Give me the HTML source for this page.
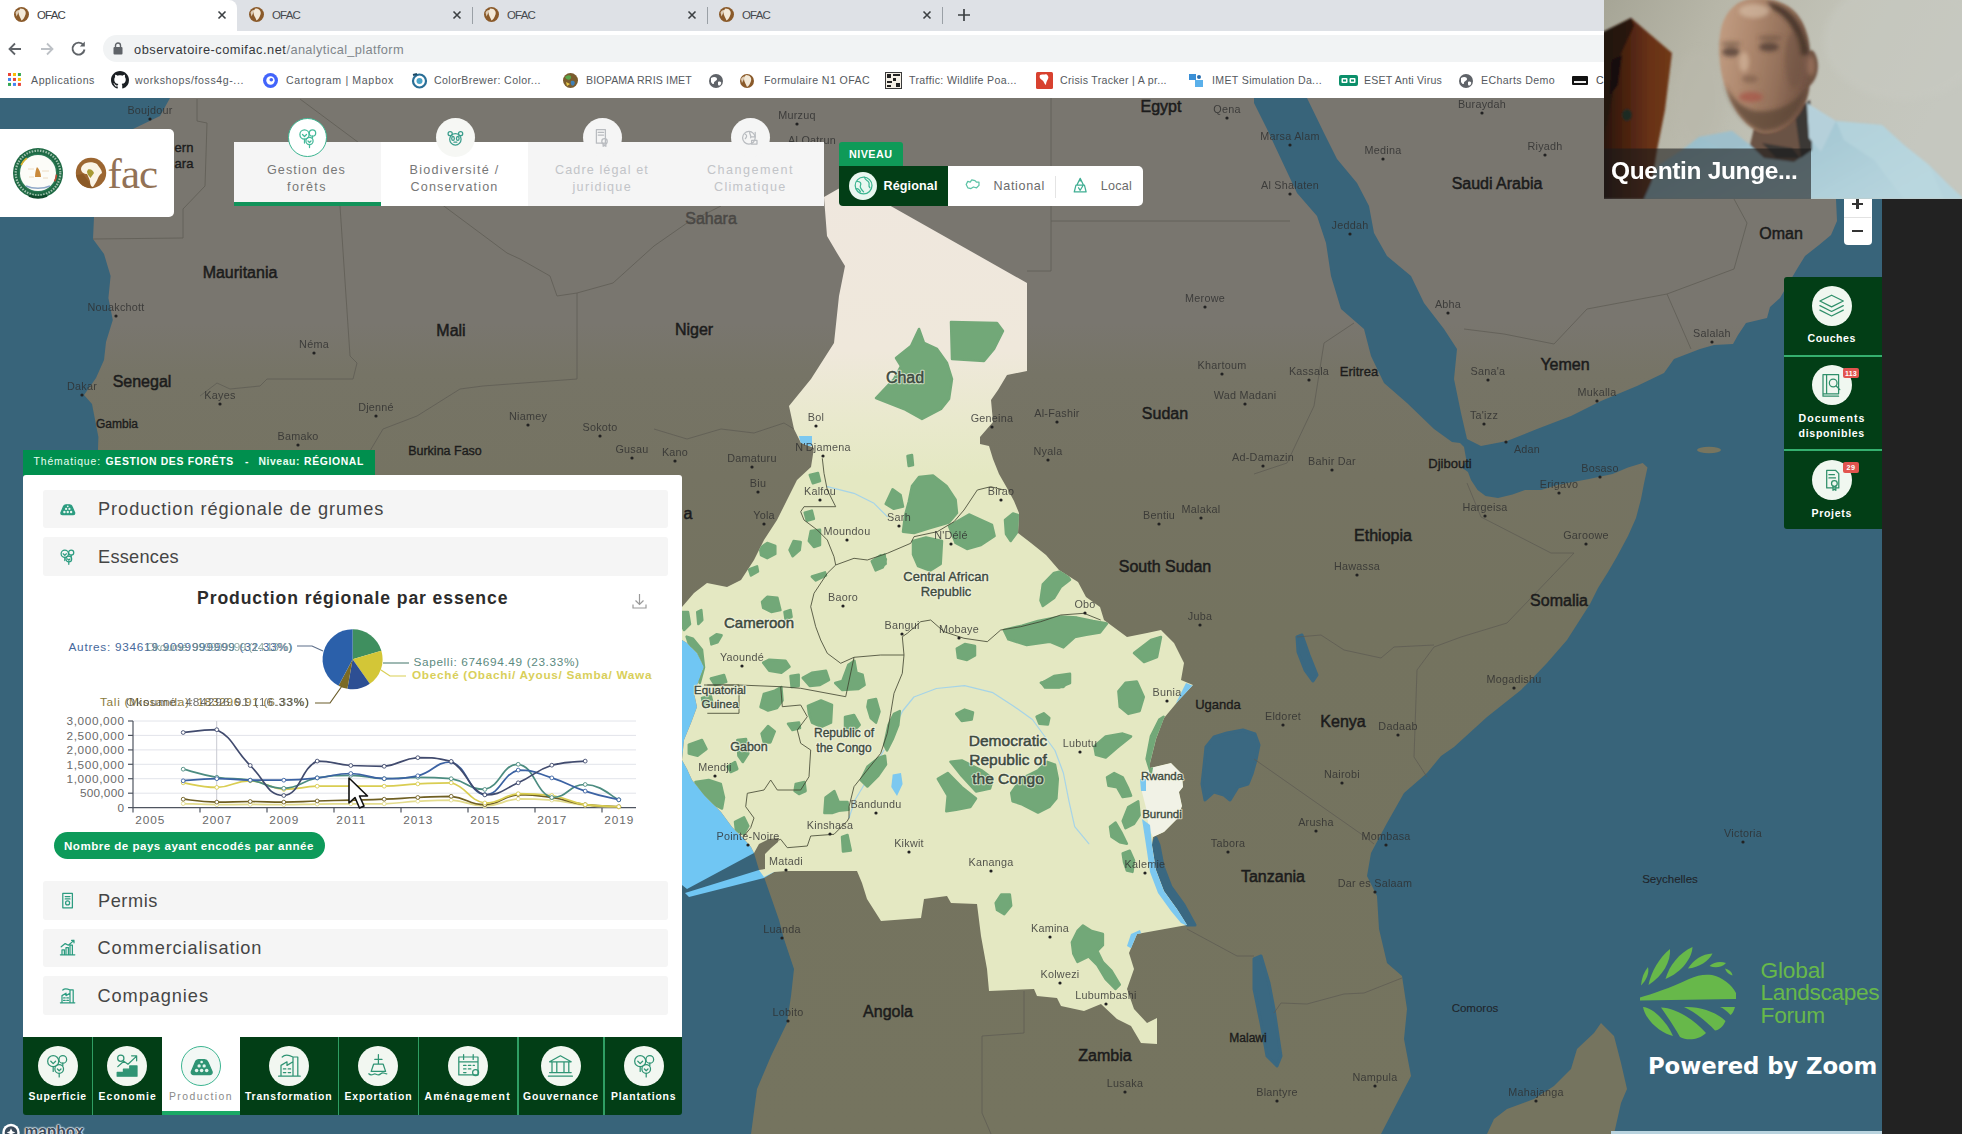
<!DOCTYPE html>
<html lang="fr"><head><meta charset="utf-8"><title>OFAC</title>
<style>
html,body{margin:0;padding:0;}
body{width:1962px;height:1134px;overflow:hidden;position:relative;background:#222;font-family:"Liberation Sans",sans-serif;}
.abs{position:absolute;}
.t{position:absolute;white-space:nowrap;}
#map{position:absolute;left:0;top:0;width:1962px;height:1134px;}
svg text{font-family:"Liberation Sans",sans-serif;}
</style></head><body>

<svg id="map" width="1962" height="1134" viewBox="0 0 1962 1134">
<defs>
<linearGradient id="land" x1="0" y1="0" x2="0" y2="1134" gradientUnits="userSpaceOnUse">
<stop offset="0" stop-color="#79766f"/><stop offset="0.285" stop-color="#79766f"/><stop offset="0.33" stop-color="#767466"/><stop offset="0.42" stop-color="#757362"/><stop offset="0.55" stop-color="#74735f"/><stop offset="1" stop-color="#75745f"/></linearGradient>
<linearGradient id="reg" x1="0" y1="0" x2="0" y2="1134" gradientUnits="userSpaceOnUse">
<stop offset="0.16" stop-color="#efe7de"/><stop offset="0.31" stop-color="#efe8db"/><stop offset="0.37" stop-color="#e9e9cd"/><stop offset="0.42" stop-color="#e4e8c2"/><stop offset="1" stop-color="#e4e8c2"/></linearGradient>
<clipPath id="mapclip"><rect x="0" y="98" width="1882" height="1036"/></clipPath>
<clipPath id="regclip"><polygon points="824,197 838,189 850,183 1027,283 1027,371 1007,375 998,390 991,400 993,422 980,437 980,444 989,446 993,459 999,474 1007,488 1014,501 1019,513 1018,533 1031,543 1046,555 1059,570 1078,582 1086,597 1100,607 1104,620 1127,637 1147,633 1161,630 1174,643 1184,663 1181,680 1193,685 1179,700 1164,718 1156,739 1150,763 1150,768 1171,763 1182,774 1183,787 1179,792 1182,806 1177,819 1164,832 1153,837 1152,845 1156,870 1164,891 1177,909 1187,925 1137,934 1129,953 1134,969 1127,989 1134,1009 1147,1023 1157,1018 1157,1044 1141,1043 1131,1026 1117,1019 1101,1004 1084,1011 1061,1006 1057,998 1037,996 1034,989 989,991 987,969 981,936 977,904 951,903 947,896 924,899 921,918 881,921 867,899 862,883 857,871 787,871 774,872 764,877 759,870 765,869 765,854 771,848 778,842 779,838 769,839 759,844 754,853 751,847 744,839 732,827 721,812 705,796 692,780 687,769 682,760 684,740 691,723 697,707 694,693 704,667 697,653 687,643 682,640 682,607 694,593 707,583 727,587 741,580 754,560 764,540 777,520 787,500 797,480 811,467 814,448 801,443 794,429 789,406 811,379 834,343 839,296 845,266 837,253 827,236"/></clipPath>
</defs>
<g clip-path="url(#mapclip)">
<rect x="0" y="98" width="1882" height="1036" fill="url(#land)"/>
<polygon points="0,98 170,98 160,116 133,129 118,165 100,200 94,217 93,239 104,254 110.6,276 108.4,298 112.8,320 106,342 104,360 96,378 84,395 92,404 95,419.5 98.4,437 98,449 100,480 100,640 0,640" fill="#38647a"/>
<polygon points="0,1134 0,640 682,640 687,643 697,653 704,667 694,693 697,707 691,723 684,740 682,760 687,769 692,780 705,796 721,812 732,827 744,839 751,847 754,853 759,870 764,877 771,897 779,920 784,939 794,969 791,996 787,1023 771,1056 757,1089 751,1134" fill="#38647a"/>
<polygon points="1254,98 1254,103 1267,129 1281,159 1297,193 1317,216 1326,243 1331,276 1341,309 1364,329 1371,356 1384,383 1407,403 1434,429 1452,442 1460,443 1464,447 1466.5,461 1461.7,467.6 1468,472 1471,480 1477.6,490 1485.6,496 1498,498 1512.5,494.6 1525,490 1541,490 1557,485 1573,482 1589,479 1612.5,474 1628,467.6 1642.7,463 1647.5,467.6 1644,483.5 1641,499 1636,518 1628,536 1617,556.5 1608,572 1598,588 1590,604 1567,640 1547,663 1521,690 1487,717 1454,747 1441,756 1427,773 1404,793 1387,823 1371,853 1367,876 1377,896 1379,929 1387,963 1402,976 1407,1009 1404,1039 1411,1076 1397,1103 1381,1134 1882,1134 1882,199 1836,199 1837,221 1831,235 1819,245 1805,256 1797,269 1780,298 1770,307 1767,318 1746,323 1738,335 1733,344 1714,345 1700,349 1674,359 1664,373 1637,386 1601,401 1571,416 1537,429 1507,441 1481,446 1467,439 1461,413 1454,379 1457,349 1444,329 1424,303 1411,276 1387,256 1374,233 1369,206 1357,183 1337,159 1324,133 1307,98" fill="#38647a"/>
<polygon points="1601,1023 1614,1036 1621,1063 1627,1089 1621,1103 1614,1134 1487,1134 1494,1119 1507,1109 1534,1099 1554,1086 1571,1069 1577,1049 1594,1033" fill="#75745f"/>
<ellipse cx="1709" cy="450" rx="12" ry="3.2" fill="#77755f"/>
<polygon points="1206,747 1214,737 1227,733 1243,730 1255,734 1259,745 1256,760 1252,774 1248,784 1238,787 1230,800 1224,795 1214,792 1205,800 1202,784 1204,766" fill="#3a6881" stroke="#3a6881" stroke-linejoin="round" stroke-width="3"/>
<polygon points="1152,845 1156,870 1164,891 1177,909 1187,925 1195,925 1184,905 1171,887 1163,866 1159,845 1156,838" fill="#3a6881" stroke="#3a6881" stroke-linejoin="round" stroke-width="3"/>
<polygon points="1297,637 1302,635 1309,655 1317,675 1313,681 1305,670 1298,652" fill="#3a6881" stroke="#3a6881" stroke-linejoin="round" stroke-width="3"/>
<polygon points="1254,959 1261,956 1269,983 1274,1009 1281,1056 1277,1066 1267,1056 1261,1023 1254,989" fill="#3a6881" stroke="#3a6881" stroke-linejoin="round" stroke-width="3"/>
<polygon points="682,640 687,643 697,653 704,667 694,693 697,707 691,723 684,740 682,760 687,769 692,780 705,796 721,812 732,827 744,839 751,847 754,853 687,889 682,885" fill="#70c6f3"/>
<polygon points="759,870 774,872 764,878 689,897 685,893" fill="#70c6f3"/>
<g fill="none" stroke="#5c5a52" stroke-width="0.9" stroke-linejoin="round" opacity="0.8">
<polyline points="93,239 183,238 183,209 205,186 207,123 197,121 197,99"/>
<polyline points="340,206 350,356 357,363 353,379 267,379 260,386 230,389 217,383 200,396"/>
<polyline points="300,99 507,253 520,259 550,276 557,296 577,293"/>
<polyline points="577,293 613,283 654,246 687,223 721,206"/>
<polyline points="577,293 577,379 483,386 460,389 417,416 383,429 367,456"/>
<polyline points="654,429 687,439 721,429 754,433 784,423 794,429"/>
<polyline points="1051,98 1051,271"/>
<polyline points="1027,271 1051,271"/>
<polyline points="1051,221 1290,221"/>
<polyline points="1467,483 1481,517 1551,553 1574,553 1507,623 1461,637 1434,647 1417,670 1414,757 1427,777"/>
<polyline points="1297,637 1321,635 1344,650 1381,658 1394,647 1434,645"/>
<polyline points="1254,759 1364,836 1374,844"/>
<polyline points="1464,329 1504,334 1554,344 1587,309 1667,294 1691,349"/>
<polyline points="1667,294 1734,269 1747,223 1734,199"/>
<polyline points="982,1036 982,1113 991,1134"/>
<polyline points="1024,991 1024,1033 982,1036"/>
<polyline points="1187,929 1237,956 1254,956"/>
<polyline points="1402,978 1364,993 1344,994 1307,1004 1281,1003 1274,1013"/>
<polyline points="1354,323 1324,343 1314,406 1287,463 1254,474"/>
</g>
<polygon points="824,197 838,189 850,183 1027,283 1027,371 1007,375 998,390 991,400 993,422 980,437 980,444 989,446 993,459 999,474 1007,488 1014,501 1019,513 1018,533 1031,543 1046,555 1059,570 1078,582 1086,597 1100,607 1104,620 1127,637 1147,633 1161,630 1174,643 1184,663 1181,680 1193,685 1179,700 1164,718 1156,739 1150,763 1150,768 1171,763 1182,774 1183,787 1179,792 1182,806 1177,819 1164,832 1153,837 1152,845 1156,870 1164,891 1177,909 1187,925 1137,934 1129,953 1134,969 1127,989 1134,1009 1147,1023 1157,1018 1157,1044 1141,1043 1131,1026 1117,1019 1101,1004 1084,1011 1061,1006 1057,998 1037,996 1034,989 989,991 987,969 981,936 977,904 951,903 947,896 924,899 921,918 881,921 867,899 862,883 857,871 787,871 774,872 764,877 759,870 765,869 765,854 771,848 778,842 779,838 769,839 759,844 754,853 751,847 744,839 732,827 721,812 705,796 692,780 687,769 682,760 684,740 691,723 697,707 694,693 704,667 697,653 687,643 682,640 682,607 694,593 707,583 727,587 741,580 754,560 764,540 777,520 787,500 797,480 811,467 814,448 801,443 794,429 789,406 811,379 834,343 839,296 845,266 837,253 827,236" fill="url(#reg)"/>
<g clip-path="url(#regclip)">
<polygon points="1150,768 1171,763 1182,774 1183,787 1179,792 1182,806 1177,819 1164,832 1153,837 1149,829 1146,808 1142,792 1142,776" fill="#f1f2e6"/>
<polygon points="1142,819 1146,845 1150,872 1158,893 1171,911 1181,923 1190,927 1177,909 1164,891 1156,870 1152,845 1150,825" fill="#7cc8f0"/>
<polygon points="1186,683 1194,686 1182,700 1176,703" fill="#7cc8f0"/>
<polygon points="1140,779 1146,779 1146,791 1141,791" fill="#7cc8f0"/>
<polygon points="799,436 812,436 812,446 801,446" fill="#7cc8f0"/>
<polygon points="892.7,774.5 901,773 902.6,784 897,796 891.3,787" fill="#7cc8f0"/>
<polygon points="1127,946 1131,934 1140,930 1142,936 1134,950" fill="#7cc8f0"/>
<g fill="none" stroke="#9bd0ee" stroke-width="1.2" opacity="0.85" stroke-linecap="round" stroke-linejoin="round">
<polyline points="888,745 893,730 902.6,711 913.9,697 936.4,688.5 964.6,685.6 992.9,692.7 1012.6,705.4 1032.4,719.5 1055,750.5 1063.4,773 1069,801.3 1074.7,826.7 1088.8,843.7"/>
<polyline points="827.3,486.7 854,493.3 874,503.3 887.3,516.7"/>
<polyline points="849,818 855,800 870,775 884,750"/>
</g>
<g fill="#72a878" stroke="#72a878" stroke-width="2.5" stroke-linejoin="round">
<polygon points="919,329 924,343 937,349 947,363 952,379 949,399 941,409 922,419 904,409 876,398 894,379 901,366 896,358 911,346"/>
<polygon points="951,322 997,323 1003,331 994,349 984,361 952,359"/>
<polygon points="912,486 919,477 933,475.5 946.5,486 955.6,499.6 957,513 949,522.5 930,528 914,533 903,531.7 905,515.6 908.7,502"/>
<polygon points="949,526 969,514.5 981,520 992,525 994.6,536 981,545 967,549 955.6,543"/>
<polygon points="913,541 926,537.4 942,541 940.7,564 930,570.7 918,566 913,554.6"/>
<polygon points="885.7,504 892.6,489.3 900.6,495 903,506.5 893.8,508.8"/>
<polygon points="907.5,456 912,455 913,465 908.7,466"/>
<polygon points="1005,520 1013,513.4 1019.8,515.6 1017.5,531.7 1010.7,541 1006,534"/>
<polygon points="1042.8,584.4 1054,573 1063.4,570.7 1070,579.8 1061,586.7 1054,598 1042.8,606 1040.5,600.5"/>
<polygon points="1003.8,630 1022,625.7 1038,621 1061,616.5 1077,617.6 1093,621 1107,623.4 1100,632.6 1086.3,634.8 1074.8,637 1063.4,647.4 1049.6,641.7 1026.7,645 1008.4,639.4"/>
<polygon points="956.8,648.6 964.8,644 975,646 975,655.5 967,660 958,657.8"/>
<polygon points="1041.6,683 1054,676 1070,673.8 1070,683 1058.8,687.6 1045,687.6"/>
<polygon points="880,557 884.6,554.6 885.7,563.8 880,568"/>
<polygon points="1134,653 1151,640 1161,637 1157,657 1144,662"/>
<polygon points="1040.8,682.8 1052,680 1069,680 1063.4,687 1046.5,687"/>
<polygon points="1118.4,691.3 1125.5,682.8 1136.8,681.4 1143.8,697 1139.6,711 1128.3,713.9 1119.8,706.8"/>
<polygon points="956.2,713.9 964.6,709.6 973,712.4 971.7,719.5 961.8,720.9"/>
<polygon points="1036.6,716.7 1043.7,713.3 1049.3,718 1047.9,724.6 1039.4,723.7"/>
<polygon points="1094.4,746.3 1105.7,736.4 1122.7,733.6 1131.1,736.4 1117,747.7 1105.7,757.6 1095.9,754.8"/>
<polygon points="1146.6,759 1150.9,736.4 1159.3,719.5 1163.6,716.7 1159.3,736.4 1153.7,756.2 1150.9,773"/>
<polygon points="950.5,761.8 961.8,760.4 981.6,770.3 992.9,778.8 990,788.6 976,791.5 961.8,776"/>
<polygon points="937.8,778.8 947.7,773 961.8,787.2 976,798.5 970.3,807 956.2,809.8 946.3,811.2 947.7,795.7"/>
<polygon points="1011.2,792.9 1021,778.8 1038,770.3 1046.5,761.8 1055,764.7 1057.8,778.8 1056.4,798.5 1049.3,807 1038,812.6 1021,804 1012.6,801.3"/>
<polygon points="1107,777.3 1114.2,773 1122.7,777.3 1128.3,788.6 1131.1,795.7 1122.7,797 1117,787.2 1108.5,785.8"/>
<polygon points="1122.7,821 1128.3,807 1138.2,801.3 1139.6,815.4 1134,823.9 1125.5,828.2"/>
<polygon points="1110,826.7 1115.6,822.5 1121.3,832.4 1126.9,843.7 1119.8,842.3 1111.4,836.6"/>
<polygon points="1122.7,853.5 1129.7,850.7 1134,860.6 1132.5,871.9 1126.9,870.5 1124,862"/>
<polygon points="995.7,902.9 1001.3,894.4 1009.8,894.4 1011.2,905.7 1004.2,914.2 997,910"/>
<polygon points="1071.9,942.4 1077.5,931 1083,925.5 1091.6,931 1102.9,934 1102.9,945.2 1097.3,950.9 1102.9,962.2 1111.4,970.6 1119.8,984.7 1115.6,989 1105.7,979 1097.3,965 1088.8,956.5 1077.5,962 1073.3,953.7"/>
<polygon points="884.2,744.9 888.5,725 894,713.9 899.8,711 898.3,725 892.7,739.3 887,750.5"/>
<polygon points="763.2,662.7 769.3,659.7 785.5,660.7 789.5,666.8 781.4,672.8 769.3,670.8"/>
<polygon points="790.5,675.9 798.7,674.8 798.7,686 791.6,687"/>
<polygon points="802.7,677.9 811.8,672.8 826,670.8 829,679.9 820,685 809.8,686"/>
<polygon points="835.2,683 842.3,681 848.4,664.7 854.4,660.7 856.5,672.8 862.6,674.8 864.6,685 858.5,689 842.3,690"/>
<polygon points="760.5,707 763.8,694 774.8,690.6 781.4,687 782.5,700.5 777,708 768,710.5"/>
<polygon points="807.9,706 821,700.5 832,705 831,722.6 821,727 812,722.6 809,713.8"/>
<polygon points="868.5,700.5 876,699 879.5,711.6 876,722.6 870.7,718 867.4,707"/>
<polygon points="845,717 854,715 859.7,724.8 854,731 845,729"/>
<polygon points="860.8,780 867.4,766.7 878.4,757.9 885,755.7 886,764.5 878.4,775.5 867.4,786.5"/>
<polygon points="761.6,733.6 768,726 774.8,731.4 770.4,742.4 763.8,742.4"/>
<polygon points="737.3,740 746,739 748.3,753.5 742.8,762 738.4,755.7"/>
<polygon points="688.8,744.6 702,740 706.5,749 697.6,755.7 688.8,753.5"/>
<polygon points="695.4,782 708.7,780 720.8,784 724,797.5 722,808.6 713,804 702,793"/>
<polygon points="727.4,766.7 735,762 737.3,769 730.7,772"/>
<polygon points="735,821.8 744,817.4 748.3,826 744,834 736,830.6"/>
<polygon points="795.7,784 804.5,782 805.6,791 799,794 794.6,791"/>
<polygon points="825.5,797.5 834.3,791 838.7,802 847.5,802 848.6,809.7 838.7,810.8 832,813 824.4,813"/>
<polygon points="842,837 847.5,835 850.8,850.5 843,851.6"/>
<polygon points="788,723.7 799,722.6 800,728 792.4,730"/>
<polygon points="702,698 710.8,696 713,705 704,707"/>
<polygon points="710.8,678.5 724,675 726.3,681.8 715,685"/>
<polygon points="686.6,636.6 693,638.8 702,649.8 704,667.5 699.8,683 695.4,674 693,656.5"/>
<polygon points="809.8,475 818,473 820,481 812.9,483.2"/>
<polygon points="804.7,512.6 811.8,510.6 813.9,518.7 806.8,520.7"/>
<polygon points="808.8,541 810.8,530.9 820,529.8 820,545 813.9,547"/>
<polygon points="789.5,550 793.6,541 800.7,542 799.7,550 792.6,556.2"/>
<polygon points="760,548 767.2,543 775.3,546 775.3,554 767.2,558.2 761,555.2"/>
<polygon points="749,569.4 757,566.3 758,571.4 751,575.5"/>
<polygon points="811.8,576.5 825,572.4 826,575.5 815.9,580.5"/>
<polygon points="871.7,561.3 880.8,555.2 885.9,559.2 882.8,567.4 875.7,570.4"/>
<polygon points="762,601.8 767.2,596.8 777.4,597.8 780.4,610 771.3,612 763.2,608"/>
<polygon points="784.5,612 790.5,610 791.6,617 785.5,619"/>
<polygon points="682,612 688,612 690,624 684,630 682,626"/>
<polygon points="697.2,612 701.3,610 702.3,620 698.3,624"/>
<polygon points="710.4,638.4 716.5,634.3 721.6,635.3 717.5,642.4 711.4,644.4"/>
</g>
<g fill="none" stroke="#3f4330" stroke-width="0.9" stroke-linejoin="round" opacity="0.9">
<polyline points="822.3,458.3 824,473.3 827.3,490 835.7,506.7 804,506.7 800.7,511.7 804,520 817.3,530 827.3,540 834,556.7 835.7,565 827.3,573.3 814,593.3 810.7,606.7 815.7,626.7 820.7,640 827.3,653.3 840.7,663.3 854,657.3 880.7,655 904,655 902.3,636.7"/>
<polyline points="835.7,565 854,558.3 867.3,560 887.3,553.3 910.7,543.3 914,536.7 937.3,531.7 954,521.7 964,510 977.3,490 990.7,486.7 1004,490"/>
<polyline points="902.3,636.7 907.3,633.3 920.7,621.7 930.7,620 944,631.7 964,638.3 987.3,641.7 1000.7,630 1020.7,626.7 1040.7,621.7 1060.7,615 1084,613.3 1100.7,620"/>
<polyline points="904,655 902.3,673.3 894,693.3 890.7,713.3 887.3,733.3 880.7,753.3 867.3,770 854,786.7 849,806.7 849,818"/>
<polyline points="849,818 847.3,821 834,834.3 810.7,836 807.3,846 787.3,847.7 780.7,839.3 760.7,846"/>
<polyline points="704,685 739,685 780.7,686.7 800.7,688.3 845.7,696.7 854,657.3"/>
<polyline points="707.3,685 739,685 739,713.3 707.3,713.3"/>
<polyline points="780.7,686.7 782.3,706.7 800.7,705 807.3,716.7 797.3,730 800.7,743.3 810.7,750 809,776.7 800.7,790 777.3,790 770.7,780 764,790 747.3,793.3 745.7,806.7 754,818"/>
<polyline points="754,818 750.7,827.7 744,836"/>
</g>
</g>
<g text-anchor="middle">
<circle cx="150" cy="119" r="1.6" fill="#222"/>
<text x="150" y="113.5" font-size="10.8" letter-spacing="0.25" fill="#2e2e2e" opacity="0.8">Boujdour</text>
<circle cx="116" cy="316" r="1.6" fill="#222"/>
<text x="116" y="310.5" font-size="10.8" letter-spacing="0.25" fill="#2e2e2e" opacity="0.8">Nouakchott</text>
<circle cx="314" cy="353" r="1.6" fill="#222"/>
<text x="314" y="347.5" font-size="10.8" letter-spacing="0.25" fill="#2e2e2e" opacity="0.8">Néma</text>
<circle cx="82" cy="395" r="1.6" fill="#222"/>
<text x="82" y="389.5" font-size="10.8" letter-spacing="0.25" fill="#2e2e2e" opacity="0.8">Dakar</text>
<circle cx="220" cy="404" r="1.6" fill="#222"/>
<text x="220" y="398.5" font-size="10.8" letter-spacing="0.25" fill="#2e2e2e" opacity="0.8">Kayes</text>
<circle cx="376" cy="416" r="1.6" fill="#222"/>
<text x="376" y="410.5" font-size="10.8" letter-spacing="0.25" fill="#2e2e2e" opacity="0.8">Djenné</text>
<circle cx="298" cy="445" r="1.6" fill="#222"/>
<text x="298" y="439.5" font-size="10.8" letter-spacing="0.25" fill="#2e2e2e" opacity="0.8">Bamako</text>
<circle cx="528" cy="425" r="1.6" fill="#222"/>
<text x="528" y="419.5" font-size="10.8" letter-spacing="0.25" fill="#2e2e2e" opacity="0.8">Niamey</text>
<circle cx="600" cy="436" r="1.6" fill="#222"/>
<text x="600" y="430.5" font-size="10.8" letter-spacing="0.25" fill="#2e2e2e" opacity="0.8">Sokoto</text>
<circle cx="632" cy="458" r="1.6" fill="#222"/>
<text x="632" y="452.5" font-size="10.8" letter-spacing="0.25" fill="#2e2e2e" opacity="0.8">Gusau</text>
<circle cx="675" cy="461" r="1.6" fill="#222"/>
<text x="675" y="455.5" font-size="10.8" letter-spacing="0.25" fill="#2e2e2e" opacity="0.8">Kano</text>
<circle cx="797" cy="124" r="1.6" fill="#222"/>
<text x="797" y="118.5" font-size="10.8" letter-spacing="0.25" fill="#2e2e2e" opacity="0.8">Murzuq</text>
<circle cx="812" cy="149" r="1.6" fill="#222"/>
<text x="812" y="143.5" font-size="10.8" letter-spacing="0.25" fill="#2e2e2e" opacity="0.8">Al Qatrun</text>
<circle cx="1227" cy="118" r="1.6" fill="#222"/>
<text x="1227" y="112.5" font-size="10.8" letter-spacing="0.25" fill="#2e2e2e" opacity="0.8">Qena</text>
<circle cx="1290" cy="145" r="1.6" fill="#222"/>
<text x="1290" y="139.5" font-size="10.8" letter-spacing="0.25" fill="#2e2e2e" opacity="0.8">Marsa Alam</text>
<circle cx="1290" cy="194" r="1.6" fill="#222"/>
<text x="1290" y="188.5" font-size="10.8" letter-spacing="0.25" fill="#2e2e2e" opacity="0.8">Al Shalaten</text>
<circle cx="1383" cy="159" r="1.6" fill="#222"/>
<text x="1383" y="153.5" font-size="10.8" letter-spacing="0.25" fill="#2e2e2e" opacity="0.8">Medina</text>
<circle cx="1482" cy="113" r="1.6" fill="#222"/>
<text x="1482" y="107.5" font-size="10.8" letter-spacing="0.25" fill="#2e2e2e" opacity="0.8">Buraydah</text>
<circle cx="1545" cy="155" r="1.6" fill="#222"/>
<text x="1545" y="149.5" font-size="10.8" letter-spacing="0.25" fill="#2e2e2e" opacity="0.8">Riyadh</text>
<circle cx="1350" cy="234" r="1.6" fill="#222"/>
<text x="1350" y="228.5" font-size="10.8" letter-spacing="0.25" fill="#2e2e2e" opacity="0.8">Jeddah</text>
<circle cx="1448" cy="313" r="1.6" fill="#222"/>
<text x="1448" y="307.5" font-size="10.8" letter-spacing="0.25" fill="#2e2e2e" opacity="0.8">Abha</text>
<circle cx="1488" cy="380" r="1.6" fill="#222"/>
<text x="1488" y="374.5" font-size="10.8" letter-spacing="0.25" fill="#2e2e2e" opacity="0.8">Sana'a</text>
<circle cx="1484" cy="424" r="1.6" fill="#222"/>
<text x="1484" y="418.5" font-size="10.8" letter-spacing="0.25" fill="#2e2e2e" opacity="0.8">Ta'izz</text>
<circle cx="1597" cy="401" r="1.6" fill="#222"/>
<text x="1597" y="395.5" font-size="10.8" letter-spacing="0.25" fill="#2e2e2e" opacity="0.8">Mukalla</text>
<circle cx="1712" cy="342" r="1.6" fill="#222"/>
<text x="1712" y="336.5" font-size="10.8" letter-spacing="0.25" fill="#2e2e2e" opacity="0.8">Salalah</text>
<circle cx="1506" cy="442" r="1.6" fill="#222"/>
<text x="1527" y="452.5" font-size="10.8" letter-spacing="0.25" fill="#2e2e2e" opacity="0.8">Adan</text>
<circle cx="1205" cy="307" r="1.6" fill="#222"/>
<text x="1205" y="301.5" font-size="10.8" letter-spacing="0.25" fill="#2e2e2e" opacity="0.8">Merowe</text>
<circle cx="1222" cy="374" r="1.6" fill="#222"/>
<text x="1222" y="368.5" font-size="10.8" letter-spacing="0.25" fill="#2e2e2e" opacity="0.8">Khartoum</text>
<circle cx="1309" cy="380" r="1.6" fill="#222"/>
<text x="1309" y="374.5" font-size="10.8" letter-spacing="0.25" fill="#2e2e2e" opacity="0.8">Kassala</text>
<circle cx="1245" cy="404" r="1.6" fill="#222"/>
<text x="1245" y="398.5" font-size="10.8" letter-spacing="0.25" fill="#2e2e2e" opacity="0.8">Wad Madani</text>
<circle cx="1057" cy="422" r="1.6" fill="#222"/>
<text x="1057" y="416.5" font-size="10.8" letter-spacing="0.25" fill="#2e2e2e" opacity="0.8">Al-Fashir</text>
<circle cx="992" cy="427" r="1.6" fill="#222"/>
<text x="992" y="421.5" font-size="10.8" letter-spacing="0.25" fill="#2e2e2e" opacity="0.8">Geneina</text>
<circle cx="1048" cy="460" r="1.6" fill="#222"/>
<text x="1048" y="454.5" font-size="10.8" letter-spacing="0.25" fill="#2e2e2e" opacity="0.8">Nyala</text>
<circle cx="1263" cy="466" r="1.6" fill="#222"/>
<text x="1263" y="460.5" font-size="10.8" letter-spacing="0.25" fill="#2e2e2e" opacity="0.8">Ad-Damazin</text>
<circle cx="1332" cy="470" r="1.6" fill="#222"/>
<text x="1332" y="464.5" font-size="10.8" letter-spacing="0.25" fill="#2e2e2e" opacity="0.8">Bahir Dar</text>
<circle cx="816" cy="426" r="1.6" fill="#222"/>
<text x="816" y="420.5" font-size="10.8" letter-spacing="0.25" fill="#2e2e2e" opacity="0.8">Bol</text>
<circle cx="823" cy="456" r="1.6" fill="#222"/>
<text x="823" y="450.5" font-size="10.8" letter-spacing="0.25" fill="#2e2e2e" opacity="0.8">N'Djamena</text>
<circle cx="752" cy="467" r="1.6" fill="#222"/>
<text x="752" y="461.5" font-size="10.8" letter-spacing="0.25" fill="#2e2e2e" opacity="0.8">Damaturu</text>
<circle cx="758" cy="492" r="1.6" fill="#222"/>
<text x="758" y="486.5" font-size="10.8" letter-spacing="0.25" fill="#2e2e2e" opacity="0.8">Biu</text>
<circle cx="764" cy="524" r="1.6" fill="#222"/>
<text x="764" y="518.5" font-size="10.8" letter-spacing="0.25" fill="#2e2e2e" opacity="0.8">Yola</text>
<circle cx="820" cy="500" r="1.6" fill="#222"/>
<text x="820" y="494.5" font-size="10.8" letter-spacing="0.25" fill="#2e2e2e" opacity="0.8">Kalfou</text>
<circle cx="847" cy="540" r="1.6" fill="#222"/>
<text x="847" y="534.5" font-size="10.8" letter-spacing="0.25" fill="#2e2e2e" opacity="0.8">Moundou</text>
<circle cx="899" cy="526" r="1.6" fill="#222"/>
<text x="899" y="520.5" font-size="10.8" letter-spacing="0.25" fill="#2e2e2e" opacity="0.8">Sarh</text>
<circle cx="951" cy="544" r="1.6" fill="#222"/>
<text x="951" y="538.5" font-size="10.8" letter-spacing="0.25" fill="#2e2e2e" opacity="0.8">N'Délé</text>
<circle cx="1001" cy="500" r="1.6" fill="#222"/>
<text x="1001" y="494.5" font-size="10.8" letter-spacing="0.25" fill="#2e2e2e" opacity="0.8">Birao</text>
<circle cx="1159" cy="524" r="1.6" fill="#222"/>
<text x="1159" y="518.5" font-size="10.8" letter-spacing="0.25" fill="#2e2e2e" opacity="0.8">Bentiu</text>
<circle cx="1201" cy="518" r="1.6" fill="#222"/>
<text x="1201" y="512.5" font-size="10.8" letter-spacing="0.25" fill="#2e2e2e" opacity="0.8">Malakal</text>
<circle cx="1600" cy="477" r="1.6" fill="#222"/>
<text x="1600" y="471.5" font-size="10.8" letter-spacing="0.25" fill="#2e2e2e" opacity="0.8">Bosaso</text>
<circle cx="1559" cy="493" r="1.6" fill="#222"/>
<text x="1559" y="487.5" font-size="10.8" letter-spacing="0.25" fill="#2e2e2e" opacity="0.8">Erigavo</text>
<circle cx="1485" cy="516" r="1.6" fill="#222"/>
<text x="1485" y="510.5" font-size="10.8" letter-spacing="0.25" fill="#2e2e2e" opacity="0.8">Hargeisa</text>
<circle cx="1586" cy="544" r="1.6" fill="#222"/>
<text x="1586" y="538.5" font-size="10.8" letter-spacing="0.25" fill="#2e2e2e" opacity="0.8">Garoowe</text>
<circle cx="1357" cy="575" r="1.6" fill="#222"/>
<text x="1357" y="569.5" font-size="10.8" letter-spacing="0.25" fill="#2e2e2e" opacity="0.8">Hawassa</text>
<circle cx="1200" cy="625" r="1.6" fill="#222"/>
<text x="1200" y="619.5" font-size="10.8" letter-spacing="0.25" fill="#2e2e2e" opacity="0.8">Juba</text>
<circle cx="1085" cy="613" r="1.6" fill="#222"/>
<text x="1085" y="607.5" font-size="10.8" letter-spacing="0.25" fill="#2e2e2e" opacity="0.8">Obo</text>
<circle cx="843" cy="606" r="1.6" fill="#222"/>
<text x="843" y="600.5" font-size="10.8" letter-spacing="0.25" fill="#2e2e2e" opacity="0.8">Baoro</text>
<circle cx="902" cy="634" r="1.6" fill="#222"/>
<text x="902" y="628.5" font-size="10.8" letter-spacing="0.25" fill="#2e2e2e" opacity="0.8">Bangui</text>
<circle cx="959" cy="638" r="1.6" fill="#222"/>
<text x="959" y="632.5" font-size="10.8" letter-spacing="0.25" fill="#2e2e2e" opacity="0.8">Mobaye</text>
<circle cx="742" cy="666" r="1.6" fill="#222"/>
<text x="742" y="660.5" font-size="10.8" letter-spacing="0.25" fill="#2e2e2e" opacity="0.8">Yaoundé</text>
<circle cx="1167" cy="701" r="1.6" fill="#222"/>
<text x="1167" y="695.5" font-size="10.8" letter-spacing="0.25" fill="#2e2e2e" opacity="0.8">Bunia</text>
<circle cx="1283" cy="725" r="1.6" fill="#222"/>
<text x="1283" y="719.5" font-size="10.8" letter-spacing="0.25" fill="#2e2e2e" opacity="0.8">Eldoret</text>
<circle cx="1080" cy="752" r="1.6" fill="#222"/>
<text x="1080" y="746.5" font-size="10.8" letter-spacing="0.25" fill="#2e2e2e" opacity="0.8">Lubutu</text>
<circle cx="1514" cy="688" r="1.6" fill="#222"/>
<text x="1514" y="682.5" font-size="10.8" letter-spacing="0.25" fill="#2e2e2e" opacity="0.8">Mogadishu</text>
<circle cx="1398" cy="735" r="1.6" fill="#222"/>
<text x="1398" y="729.5" font-size="10.8" letter-spacing="0.25" fill="#2e2e2e" opacity="0.8">Dadaab</text>
<circle cx="1342" cy="783" r="1.6" fill="#222"/>
<text x="1342" y="777.5" font-size="10.8" letter-spacing="0.25" fill="#2e2e2e" opacity="0.8">Nairobi</text>
<circle cx="1316" cy="831" r="1.6" fill="#222"/>
<text x="1316" y="825.5" font-size="10.8" letter-spacing="0.25" fill="#2e2e2e" opacity="0.8">Arusha</text>
<circle cx="1386" cy="845" r="1.6" fill="#222"/>
<text x="1386" y="839.5" font-size="10.8" letter-spacing="0.25" fill="#2e2e2e" opacity="0.8">Mombasa</text>
<circle cx="715" cy="776" r="1.6" fill="#222"/>
<text x="715" y="770.5" font-size="10.8" letter-spacing="0.25" fill="#2e2e2e" opacity="0.8">Mendji</text>
<circle cx="876" cy="813" r="1.6" fill="#222"/>
<text x="876" y="807.5" font-size="10.8" letter-spacing="0.25" fill="#2e2e2e" opacity="0.8">Bandundu</text>
<circle cx="830" cy="834" r="1.6" fill="#222"/>
<text x="830" y="828.5" font-size="10.8" letter-spacing="0.25" fill="#2e2e2e" opacity="0.8">Kinshasa</text>
<circle cx="748" cy="845" r="1.6" fill="#222"/>
<text x="748" y="839.5" font-size="10.8" letter-spacing="0.25" fill="#2e2e2e" opacity="0.8">Pointe-Noire</text>
<circle cx="786" cy="870" r="1.6" fill="#222"/>
<text x="786" y="864.5" font-size="10.8" letter-spacing="0.25" fill="#2e2e2e" opacity="0.8">Matadi</text>
<circle cx="909" cy="852" r="1.6" fill="#222"/>
<text x="909" y="846.5" font-size="10.8" letter-spacing="0.25" fill="#2e2e2e" opacity="0.8">Kikwit</text>
<circle cx="991" cy="871" r="1.6" fill="#222"/>
<text x="991" y="865.5" font-size="10.8" letter-spacing="0.25" fill="#2e2e2e" opacity="0.8">Kananga</text>
<circle cx="1145" cy="873" r="1.6" fill="#222"/>
<text x="1145" y="867.5" font-size="10.8" letter-spacing="0.25" fill="#2e2e2e" opacity="0.8">Kalemie</text>
<circle cx="1228" cy="852" r="1.6" fill="#222"/>
<text x="1228" y="846.5" font-size="10.8" letter-spacing="0.25" fill="#2e2e2e" opacity="0.8">Tabora</text>
<circle cx="1375" cy="892" r="1.6" fill="#222"/>
<text x="1375" y="886.5" font-size="10.8" letter-spacing="0.25" fill="#2e2e2e" opacity="0.8">Dar es Salaam</text>
<circle cx="1050" cy="937" r="1.6" fill="#222"/>
<text x="1050" y="931.5" font-size="10.8" letter-spacing="0.25" fill="#2e2e2e" opacity="0.8">Kamina</text>
<circle cx="1060" cy="983" r="1.6" fill="#222"/>
<text x="1060" y="977.5" font-size="10.8" letter-spacing="0.25" fill="#2e2e2e" opacity="0.8">Kolwezi</text>
<circle cx="1106" cy="1004" r="1.6" fill="#222"/>
<text x="1106" y="998.5" font-size="10.8" letter-spacing="0.25" fill="#2e2e2e" opacity="0.8">Lubumbashi</text>
<circle cx="782" cy="938" r="1.6" fill="#222"/>
<text x="782" y="932.5" font-size="10.8" letter-spacing="0.25" fill="#2e2e2e" opacity="0.8">Luanda</text>
<circle cx="788" cy="1021" r="1.6" fill="#222"/>
<text x="788" y="1015.5" font-size="10.8" letter-spacing="0.25" fill="#2e2e2e" opacity="0.8">Lobito</text>
<circle cx="1125" cy="1092" r="1.6" fill="#222"/>
<text x="1125" y="1086.5" font-size="10.8" letter-spacing="0.25" fill="#2e2e2e" opacity="0.8">Lusaka</text>
<circle cx="1277" cy="1101" r="1.6" fill="#222"/>
<text x="1277" y="1095.5" font-size="10.8" letter-spacing="0.25" fill="#2e2e2e" opacity="0.8">Blantyre</text>
<circle cx="1375" cy="1086" r="1.6" fill="#222"/>
<text x="1375" y="1080.5" font-size="10.8" letter-spacing="0.25" fill="#2e2e2e" opacity="0.8">Nampula</text>
<circle cx="1536" cy="1101" r="1.6" fill="#222"/>
<text x="1536" y="1095.5" font-size="10.8" letter-spacing="0.25" fill="#2e2e2e" opacity="0.8">Mahajanga</text>
<circle cx="1743" cy="842" r="1.6" fill="#222"/>
<text x="1743" y="836.5" font-size="10.8" letter-spacing="0.25" fill="#2e2e2e" opacity="0.8">Victoria</text>
<text x="240" y="277.6" font-size="16" fill="#1c1c1c" stroke="#1c1c1c" stroke-width="0.5">Mauritania</text>
<text x="451" y="335.6" font-size="16" fill="#1c1c1c" stroke="#1c1c1c" stroke-width="0.5">Mali</text>
<text x="694" y="334.6" font-size="16" fill="#1c1c1c" stroke="#1c1c1c" stroke-width="0.5">Niger</text>
<text x="142" y="386.6" font-size="16" fill="#1c1c1c" stroke="#1c1c1c" stroke-width="0.5">Senegal</text>
<text x="117" y="428.2" font-size="12" fill="#1c1c1c" stroke="#1c1c1c" stroke-width="0.35">Gambia</text>
<text x="445" y="455.4" font-size="12.5" fill="#1c1c1c" stroke="#1c1c1c" stroke-width="0.35">Burkina Faso</text>
<text x="711" y="223.6" font-size="16" fill="#4a4845" stroke="#4a4845" stroke-width="0.5">Sahara</text>
<text x="1161" y="111.6" font-size="16" fill="#1c1c1c" stroke="#1c1c1c" stroke-width="0.5">Egypt</text>
<text x="1497" y="188.6" font-size="16" fill="#1c1c1c" stroke="#1c1c1c" stroke-width="0.5">Saudi Arabia</text>
<text x="1781" y="238.6" font-size="16" fill="#1c1c1c" stroke="#1c1c1c" stroke-width="0.5">Oman</text>
<text x="1565" y="369.6" font-size="16" fill="#1c1c1c" stroke="#1c1c1c" stroke-width="0.5">Yemen</text>
<text x="1359" y="375.6" font-size="13" fill="#1c1c1c" stroke="#1c1c1c" stroke-width="0.35">Eritrea</text>
<text x="1165" y="418.6" font-size="16" fill="#1c1c1c" stroke="#1c1c1c" stroke-width="0.5">Sudan</text>
<text x="905" y="382.6" font-size="16" fill="none" stroke="#f4f6e4" stroke-opacity="0.7" stroke-width="2.6" stroke-linejoin="round">Chad</text>
<text x="905" y="382.6" font-size="16" fill="#3d4a40" stroke="#3d4a40" stroke-width="0.5">Chad</text>
<text x="1450" y="467.6" font-size="13" fill="#1c1c1c" stroke="#1c1c1c" stroke-width="0.35">Djibouti</text>
<text x="1383" y="540.6" font-size="16" fill="#1c1c1c" stroke="#1c1c1c" stroke-width="0.5">Ethiopia</text>
<text x="1165" y="571.6" font-size="16" fill="#1c1c1c" stroke="#1c1c1c" stroke-width="0.5">South Sudan</text>
<text x="1559" y="605.6" font-size="16" fill="#1c1c1c" stroke="#1c1c1c" stroke-width="0.5">Somalia</text>
<text x="946" y="580.5" font-size="13" fill="none" stroke="#f4f6e4" stroke-opacity="0.7" stroke-width="2.6" stroke-linejoin="round">Central African</text>
<text x="946" y="580.5" font-size="13" fill="#3d4a40" stroke="#3d4a40" stroke-width="0.35">Central African</text>
<text x="946" y="595.5" font-size="13" fill="none" stroke="#f4f6e4" stroke-opacity="0.7" stroke-width="2.6" stroke-linejoin="round">Republic</text>
<text x="946" y="595.5" font-size="13" fill="#3d4a40" stroke="#3d4a40" stroke-width="0.35">Republic</text>
<text x="759" y="628.2" font-size="15" fill="none" stroke="#f4f6e4" stroke-opacity="0.7" stroke-width="2.6" stroke-linejoin="round">Cameroon</text>
<text x="759" y="628.2" font-size="15" fill="#3d4a40" stroke="#3d4a40" stroke-width="0.5">Cameroon</text>
<text x="1218" y="708.5" font-size="13" fill="#1c1c1c" stroke="#1c1c1c" stroke-width="0.35">Uganda</text>
<text x="1343" y="726.6" font-size="16" fill="#1c1c1c" stroke="#1c1c1c" stroke-width="0.5">Kenya</text>
<text x="720" y="694.0" font-size="11.5" fill="none" stroke="#f4f6e4" stroke-opacity="0.7" stroke-width="2.6" stroke-linejoin="round">Equatorial</text>
<text x="720" y="694.0" font-size="11.5" fill="#3d4a40" stroke="#3d4a40" stroke-width="0.35">Equatorial</text>
<text x="720" y="708.0" font-size="11.5" fill="none" stroke="#f4f6e4" stroke-opacity="0.7" stroke-width="2.6" stroke-linejoin="round">Guinea</text>
<text x="720" y="708.0" font-size="11.5" fill="#3d4a40" stroke="#3d4a40" stroke-width="0.35">Guinea</text>
<text x="749" y="751.4" font-size="12.5" fill="none" stroke="#f4f6e4" stroke-opacity="0.7" stroke-width="2.6" stroke-linejoin="round">Gabon</text>
<text x="749" y="751.4" font-size="12.5" fill="#3d4a40" stroke="#3d4a40" stroke-width="0.35">Gabon</text>
<text x="844" y="737.2" font-size="12" fill="none" stroke="#f4f6e4" stroke-opacity="0.7" stroke-width="2.6" stroke-linejoin="round">Republic of</text>
<text x="844" y="737.2" font-size="12" fill="#3d4a40" stroke="#3d4a40" stroke-width="0.35">Republic of</text>
<text x="844" y="752.2" font-size="12" fill="none" stroke="#f4f6e4" stroke-opacity="0.7" stroke-width="2.6" stroke-linejoin="round">the Congo</text>
<text x="844" y="752.2" font-size="12" fill="#3d4a40" stroke="#3d4a40" stroke-width="0.35">the Congo</text>
<text x="1008" y="746.4" font-size="15.5" fill="none" stroke="#f4f6e4" stroke-opacity="0.7" stroke-width="2.6" stroke-linejoin="round">Democratic</text>
<text x="1008" y="746.4" font-size="15.5" fill="#3d4a40" stroke="#3d4a40" stroke-width="0.5">Democratic</text>
<text x="1008" y="765.4" font-size="15.5" fill="none" stroke="#f4f6e4" stroke-opacity="0.7" stroke-width="2.6" stroke-linejoin="round">Republic of</text>
<text x="1008" y="765.4" font-size="15.5" fill="#3d4a40" stroke="#3d4a40" stroke-width="0.5">Republic of</text>
<text x="1008" y="784.4" font-size="15.5" fill="none" stroke="#f4f6e4" stroke-opacity="0.7" stroke-width="2.6" stroke-linejoin="round">the Congo</text>
<text x="1008" y="784.4" font-size="15.5" fill="#3d4a40" stroke="#3d4a40" stroke-width="0.5">the Congo</text>
<text x="1162" y="780.0" font-size="11.5" fill="none" stroke="#f4f6e4" stroke-opacity="0.7" stroke-width="2.6" stroke-linejoin="round">Rwanda</text>
<text x="1162" y="780.0" font-size="11.5" fill="#3d4a40" stroke="#3d4a40" stroke-width="0.35">Rwanda</text>
<text x="1162" y="818.0" font-size="11.5" fill="none" stroke="#f4f6e4" stroke-opacity="0.7" stroke-width="2.6" stroke-linejoin="round">Burundi</text>
<text x="1162" y="818.0" font-size="11.5" fill="#3d4a40" stroke="#3d4a40" stroke-width="0.35">Burundi</text>
<text x="1273" y="881.6" font-size="16" fill="#1c1c1c" stroke="#1c1c1c" stroke-width="0.5">Tanzania</text>
<text x="888" y="1016.6" font-size="16" fill="#1c1c1c" stroke="#1c1c1c" stroke-width="0.5">Angola</text>
<text x="1105" y="1060.6" font-size="16" fill="#1c1c1c" stroke="#1c1c1c" stroke-width="0.5">Zambia</text>
<text x="1248" y="1042.2" font-size="12" fill="#1c1c1c" stroke="#1c1c1c" stroke-width="0.35">Malawi</text>
<text x="1670" y="883.0" font-size="11.5" fill="#20252a" stroke="#20252a" stroke-width="0.1">Seychelles</text>
<text x="1475" y="1012.0" font-size="11.5" fill="#20252a" stroke="#20252a" stroke-width="0.1">Comoros</text>
<text x="184" y="151.6" font-size="13" fill="#1c1c1c" stroke="#1c1c1c" stroke-width="0.35">ern</text>
<text x="184" y="167.6" font-size="13" fill="#1c1c1c" stroke="#1c1c1c" stroke-width="0.35">ara</text>
<text x="688" y="518.6" font-size="16" fill="#1c1c1c" stroke="#1c1c1c" stroke-width="0.5">a</text>
</g>
</g></svg>
<div class="abs" style="left:0;top:0;width:1604px;height:98px;background:#fff"></div>
<div class="abs" style="left:0;top:0;width:1604px;height:31px;background:#dee1e6"></div>
<div class="abs" style="left:0;top:0;width:237px;height:31px;background:#fff;border-radius:0 8px 0 0"></div>
<svg class="abs" style="left:12.5px;top:6.0px" width="17.0" height="17.0" viewBox="-8.5 -8.5 17.0 17.0"><circle r="7.5" fill="#8a5a2a"/><path d="M-1,-6 C3,-6 5,-3 4,0 C3,3 2,5 0,6 C-1,3 -3,1 -3,-2 C-3,-4 -2,-5 -1,-6Z" fill="#f3e9d8"/><path d="M-6,-2 C-5,-4 -3,-5 -2,-4 C-3,-2 -4,0 -5,2Z" fill="#f3e9d8" opacity=".8"/></svg>
<div class="t" style="left:37.0px;top:7.5px;font-size:11.5px;line-height:15px;color:#3c4043;font-weight:normal;letter-spacing:-0.83px;">OFAC</div>
<svg class="abs" style="left:247.5px;top:6.0px" width="17.0" height="17.0" viewBox="-8.5 -8.5 17.0 17.0"><circle r="7.5" fill="#8a5a2a"/><path d="M-1,-6 C3,-6 5,-3 4,0 C3,3 2,5 0,6 C-1,3 -3,1 -3,-2 C-3,-4 -2,-5 -1,-6Z" fill="#f3e9d8"/><path d="M-6,-2 C-5,-4 -3,-5 -2,-4 C-3,-2 -4,0 -5,2Z" fill="#f3e9d8" opacity=".8"/></svg>
<div class="t" style="left:272.0px;top:7.5px;font-size:11.5px;line-height:15px;color:#45494d;font-weight:normal;letter-spacing:-0.83px;">OFAC</div>
<svg class="abs" style="left:482.5px;top:6.0px" width="17.0" height="17.0" viewBox="-8.5 -8.5 17.0 17.0"><circle r="7.5" fill="#8a5a2a"/><path d="M-1,-6 C3,-6 5,-3 4,0 C3,3 2,5 0,6 C-1,3 -3,1 -3,-2 C-3,-4 -2,-5 -1,-6Z" fill="#f3e9d8"/><path d="M-6,-2 C-5,-4 -3,-5 -2,-4 C-3,-2 -4,0 -5,2Z" fill="#f3e9d8" opacity=".8"/></svg>
<div class="t" style="left:507.0px;top:7.5px;font-size:11.5px;line-height:15px;color:#45494d;font-weight:normal;letter-spacing:-0.83px;">OFAC</div>
<svg class="abs" style="left:717.5px;top:6.0px" width="17.0" height="17.0" viewBox="-8.5 -8.5 17.0 17.0"><circle r="7.5" fill="#8a5a2a"/><path d="M-1,-6 C3,-6 5,-3 4,0 C3,3 2,5 0,6 C-1,3 -3,1 -3,-2 C-3,-4 -2,-5 -1,-6Z" fill="#f3e9d8"/><path d="M-6,-2 C-5,-4 -3,-5 -2,-4 C-3,-2 -4,0 -5,2Z" fill="#f3e9d8" opacity=".8"/></svg>
<div class="t" style="left:742.0px;top:7.5px;font-size:11.5px;line-height:15px;color:#45494d;font-weight:normal;letter-spacing:-0.83px;">OFAC</div>
<svg class="abs" style="left:217px;top:10px" width="10" height="10" viewBox="0 0 10 10"><path d="M1.5,1.5L8.5,8.5M8.5,1.5L1.5,8.5" stroke="#3c4043" stroke-width="1.6"/></svg>
<svg class="abs" style="left:452px;top:10px" width="10" height="10" viewBox="0 0 10 10"><path d="M1.5,1.5L8.5,8.5M8.5,1.5L1.5,8.5" stroke="#3c4043" stroke-width="1.6"/></svg>
<svg class="abs" style="left:687px;top:10px" width="10" height="10" viewBox="0 0 10 10"><path d="M1.5,1.5L8.5,8.5M8.5,1.5L1.5,8.5" stroke="#3c4043" stroke-width="1.6"/></svg>
<svg class="abs" style="left:922px;top:10px" width="10" height="10" viewBox="0 0 10 10"><path d="M1.5,1.5L8.5,8.5M8.5,1.5L1.5,8.5" stroke="#3c4043" stroke-width="1.6"/></svg>
<div class="abs" style="left:471.5px;top:7px;width:1px;height:17px;background:#9aa0a6"></div>
<div class="abs" style="left:706.5px;top:7px;width:1px;height:17px;background:#9aa0a6"></div>
<div class="abs" style="left:942px;top:7px;width:1px;height:17px;background:#9aa0a6"></div>
<svg class="abs" style="left:957px;top:8px" width="14" height="14" viewBox="0 0 14 14"><path d="M7,1V13M1,7H13" stroke="#3c4043" stroke-width="1.7"/></svg>
<div class="abs" style="left:0;top:31px;width:1604px;height:35px;background:#fff"></div>
<div class="abs" style="left:103px;top:35px;width:1520px;height:27px;background:#f1f3f4;border-radius:14px 0 0 14px"></div>
<svg class="abs" style="left:7px;top:41px" width="16" height="16" viewBox="0 0 16 16"><path d="M14,8H3M8,2.5L2.5,8L8,13.5" stroke="#5f6368" stroke-width="1.8" fill="none"/></svg>
<svg class="abs" style="left:39px;top:41px" width="16" height="16" viewBox="0 0 16 16"><path d="M2,8H13M8,2.5L13.5,8L8,13.5" stroke="#bdc1c6" stroke-width="1.8" fill="none"/></svg>
<svg class="abs" style="left:70px;top:40px" width="17" height="17" viewBox="0 0 17 17"><path d="M13.5,5.2A6,6 0 1 0 14.5,9.5" stroke="#5f6368" stroke-width="1.9" fill="none"/><path d="M14.8,1.5V6.5H9.8Z" fill="#5f6368"/></svg>
<svg class="abs" style="left:113px;top:42px" width="10" height="13" viewBox="0 0 10 13"><rect x="0.5" y="5" width="9" height="7.5" rx="1" fill="#5f6368"/><path d="M2.5,5V3.5a2.5,2.5 0 0 1 5,0V5" stroke="#5f6368" stroke-width="1.4" fill="none"/></svg>
<div class="t" style="left:134.0px;top:40.6px;font-size:12.8px;line-height:17px;color:#35383c;font-weight:normal;letter-spacing:0.51px;">observatoire-comifac.net</div>
<div class="t" style="left:286.5px;top:40.6px;font-size:12.8px;line-height:17px;color:#80868b;font-weight:normal;letter-spacing:0.36px;">/analytical_platform</div>
<div class="abs" style="left:0;top:66px;width:1604px;height:32px;background:#fff"></div>
<svg class="abs" style="left:8px;top:73px" width="14" height="14" viewBox="0 0 13 13"><rect x="0.0" y="0.0" width="2.8" height="2.8" fill="#ea4335"/><rect x="4.6" y="0.0" width="2.8" height="2.8" fill="#fbbc04"/><rect x="9.2" y="0.0" width="2.8" height="2.8" fill="#34a853"/><rect x="0.0" y="4.6" width="2.8" height="2.8" fill="#4285f4"/><rect x="4.6" y="4.6" width="2.8" height="2.8" fill="#ea4335"/><rect x="9.2" y="4.6" width="2.8" height="2.8" fill="#fbbc04"/><rect x="0.0" y="9.2" width="2.8" height="2.8" fill="#34a853"/><rect x="4.6" y="9.2" width="2.8" height="2.8" fill="#4285f4"/><rect x="9.2" y="9.2" width="2.8" height="2.8" fill="#ea4335"/></svg>
<div class="t" style="left:31.0px;top:73.3px;font-size:10.6px;line-height:14px;color:#55595e;font-weight:normal;letter-spacing:0.57px;">Applications</div>
<div class="t" style="left:135.0px;top:73.3px;font-size:10.6px;line-height:14px;color:#55595e;font-weight:normal;letter-spacing:0.59px;">workshops/foss4g-...</div>
<div class="t" style="left:286.0px;top:73.3px;font-size:10.6px;line-height:14px;color:#55595e;font-weight:normal;letter-spacing:0.64px;">Cartogram | Mapbox</div>
<div class="t" style="left:434.0px;top:73.3px;font-size:10.6px;line-height:14px;color:#55595e;font-weight:normal;letter-spacing:0.41px;">ColorBrewer: Color...</div>
<div class="t" style="left:586.0px;top:73.3px;font-size:10.6px;line-height:14px;color:#55595e;font-weight:normal;letter-spacing:0.15px;">BIOPAMA RRIS IMET</div>
<div class="t" style="left:764.0px;top:73.3px;font-size:10.6px;line-height:14px;color:#55595e;font-weight:normal;letter-spacing:0.39px;">Formulaire N1 OFAC</div>
<div class="t" style="left:909.0px;top:73.3px;font-size:10.6px;line-height:14px;color:#55595e;font-weight:normal;letter-spacing:0.35px;">Traffic: Wildlife Poa...</div>
<div class="t" style="left:1060.0px;top:73.3px;font-size:10.6px;line-height:14px;color:#55595e;font-weight:normal;letter-spacing:0.29px;">Crisis Tracker | A pr...</div>
<div class="t" style="left:1212.0px;top:73.3px;font-size:10.6px;line-height:14px;color:#55595e;font-weight:normal;letter-spacing:0.34px;">IMET Simulation Da...</div>
<div class="t" style="left:1364.0px;top:73.3px;font-size:10.6px;line-height:14px;color:#55595e;font-weight:normal;letter-spacing:0.20px;">ESET Anti Virus</div>
<div class="t" style="left:1481.0px;top:73.3px;font-size:10.6px;line-height:14px;color:#55595e;font-weight:normal;letter-spacing:0.37px;">ECharts Demo</div>
<svg class="abs" style="left:111px;top:71px" width="18" height="18" viewBox="0 0 16 16"><path fill="#1b1f23" d="M8 0C3.58 0 0 3.58 0 8c0 3.54 2.29 6.53 5.47 7.59.4.07.55-.17.55-.38 0-.19-.01-.82-.01-1.49-2.01.37-2.53-.49-2.69-.94-.09-.23-.48-.94-.82-1.13-.28-.15-.68-.52-.01-.53.63-.01 1.08.58 1.23.82.72 1.21 1.87.87 2.33.66.07-.52.28-.87.51-1.07-1.78-.2-3.64-.89-3.64-3.95 0-.87.31-1.59.82-2.15-.08-.2-.36-1.02.08-2.12 0 0 .67-.21 2.2.82.64-.18 1.32-.27 2-.27s1.36.09 2 .27c1.53-1.04 2.2-.82 2.2-.82.44 1.1.16 1.92.08 2.12.51.56.82 1.27.82 2.15 0 3.07-1.87 3.75-3.65 3.95.29.25.54.73.54 1.48 0 1.07-.01 1.93-.01 2.2 0 .21.15.46.55.38A8.01 8.01 0 0 0 16 8c0-4.42-3.58-8-8-8z"/></svg>
<svg class="abs" style="left:262px;top:72px" width="17" height="17" viewBox="0 0 17 17"><circle cx="8.5" cy="8.5" r="7.5" fill="#4264fb"/><circle cx="8.5" cy="8.5" r="4.2" fill="#fff"/><circle cx="9.3" cy="7.7" r="1.8" fill="#4264fb"/></svg>
<svg class="abs" style="left:411px;top:72px" width="17" height="17" viewBox="0 0 17 17"><circle cx="8.5" cy="9" r="6.5" fill="none" stroke="#2a6f97" stroke-width="2.2"/><circle cx="8.5" cy="9" r="3" fill="#4aa3c7"/><path d="M2,3L6,2" stroke="#1b4965" stroke-width="2"/></svg>
<svg class="abs" style="left:562px;top:72px" width="17" height="17" viewBox="0 0 17 17"><circle cx="8.5" cy="8.5" r="7.5" fill="#7a5c2e"/><path d="M3,5C6,2 10,3 9,6C8,9 4,8 3,5Z" fill="#5aa64a"/><path d="M9,9C12,8 14,10 12,13C10,15 8,12 9,9Z" fill="#3f7fb5"/><path d="M4,10l4,2l-3,2z" fill="#e8c84a"/></svg>
<svg class="abs" style="left:708px;top:73px" width="16" height="16" viewBox="-8 -8 16 16"><circle r="7" fill="#5f6368"/><path d="M-5,-3 C-2,-5 1,-4 1,-2 C1,0 -2,0 -2,2 C-2,4 -4,3 -5,1Z M2,1 C4,0 6,1 5,3 C4,5 2,5 2,3Z" fill="#fff"/></svg>
<svg class="abs" style="left:739px;top:73px" width="16" height="16" viewBox="-8 -8 16 16"><circle r="7" fill="#8a5a2a"/><path d="M-1,-6 C3,-6 5,-3 4,0 C3,3 2,5 0,6 C-1,3 -3,1 -3,-2 C-3,-4 -2,-5 -1,-6Z" fill="#f3e9d8"/><path d="M-6,-2 C-5,-4 -3,-5 -2,-4 C-3,-2 -4,0 -5,2Z" fill="#f3e9d8" opacity=".8"/></svg>
<svg class="abs" style="left:885px;top:72px" width="17" height="17" viewBox="0 0 17 17"><rect x="0.5" y="0.5" width="16" height="16" fill="#f5f0e6" stroke="#3a3a3a"/><rect x="2" y="2" width="4" height="4" fill="#222"/><rect x="8" y="2" width="7" height="2" fill="#222"/><rect x="8" y="6" width="3" height="3" fill="#222"/><rect x="2" y="9" width="5" height="2" fill="#222"/><rect x="2" y="13" width="4" height="2" fill="#222"/><rect x="11" y="11" width="4" height="4" fill="#222"/></svg>
<svg class="abs" style="left:1036px;top:72px" width="17" height="17" viewBox="0 0 17 17"><rect width="17" height="17" rx="1.5" fill="#d8412f"/><path d="M4,3C7,2 9,3 10,2C12,3 13,5 12,7C11,9 10,10 10,13C8,12 8,9 6,8C4,7 3,5 4,3Z" fill="#fff"/></svg>
<svg class="abs" style="left:1188px;top:72px" width="17" height="17" viewBox="0 0 17 17"><rect x="1" y="2" width="7" height="6" fill="#3a8fd6"/><rect x="7" y="8" width="8" height="7" fill="#5ab0ea"/><circle cx="11" cy="5" r="2" fill="#2a6fb0"/></svg>
<svg class="abs" style="left:1339px;top:75px" width="19" height="11" viewBox="0 0 19 11"><rect width="19" height="11" rx="2" fill="#0b8f6a"/><rect x="2.5" y="3" width="6" height="5" rx="1" fill="#fff"/><rect x="10.5" y="3" width="6" height="5" rx="1" fill="#fff"/><rect x="4" y="4.5" width="3" height="2" fill="#0b8f6a"/><rect x="12" y="4.5" width="3" height="2" fill="#0b8f6a"/></svg>
<svg class="abs" style="left:1458px;top:73px" width="16" height="16" viewBox="-8 -8 16 16"><circle r="7" fill="#5f6368"/><path d="M-5,-3 C-2,-5 1,-4 1,-2 C1,0 -2,0 -2,2 C-2,4 -4,3 -5,1Z M2,1 C4,0 6,1 5,3 C4,5 2,5 2,3Z" fill="#fff"/></svg>
<div class="abs" style="left:1572px;top:76px;width:16px;height:9px;background:#111;border-radius:1px"></div><div class="abs" style="left:1574px;top:81px;width:12px;height:2px;background:#eee"></div>
<div class="t" style="left:1596.0px;top:73.3px;font-size:10.6px;line-height:14px;color:#4a4d51;font-weight:normal;letter-spacing:-0.66px;">C</div>
<svg class="abs" style="left:1604px;top:0" width="358" height="199" viewBox="0 0 358 199">
<defs>
<linearGradient id="wall" x1="0" y1="0" x2="1" y2="0.3"><stop offset="0" stop-color="#a6a596"/><stop offset="0.3" stop-color="#b7b6a8"/><stop offset="0.65" stop-color="#c2c3b8"/><stop offset="1" stop-color="#c5c7bf"/></linearGradient>
<linearGradient id="door" x1="0" y1="0" x2="1" y2="0"><stop offset="0" stop-color="#24130e"/><stop offset="0.35" stop-color="#4a2210"/><stop offset="0.7" stop-color="#693217"/><stop offset="1" stop-color="#70391a"/></linearGradient>
<linearGradient id="face" x1="0" y1="0" x2="1" y2="0.25"><stop offset="0" stop-color="#c4a085"/><stop offset="0.35" stop-color="#b08a70"/><stop offset="0.7" stop-color="#93705a"/><stop offset="1" stop-color="#705243"/></linearGradient>
<linearGradient id="shirt" x1="0" y1="0" x2="1" y2="0.5"><stop offset="0" stop-color="#8db3c1"/><stop offset="0.45" stop-color="#a2c6d2"/><stop offset="1" stop-color="#b6d4dd"/></linearGradient>
<filter id="b1" x="-20%" y="-20%" width="140%" height="140%"><feGaussianBlur stdDeviation="1.3"/></filter>
<filter id="b2" x="-30%" y="-30%" width="160%" height="160%"><feGaussianBlur stdDeviation="3.5"/></filter>
<filter id="b3" x="-30%" y="-30%" width="160%" height="160%"><feGaussianBlur stdDeviation="2"/></filter>
</defs>
<rect width="358" height="199" fill="url(#wall)"/>
<ellipse cx="300" cy="40" rx="80" ry="60" fill="#c9cbc3" opacity=".45" filter="url(#b2)"/>
<ellipse cx="95" cy="100" rx="25" ry="50" fill="#b9b8ab" opacity=".5" filter="url(#b2)"/>
<g filter="url(#b1)">
<polygon points="-3,33 27,18 68,53 61,110 53,150 45,199 -3,199" fill="url(#door)"/>
<polygon points="-3,33 27,18 30,26 14,60 6,110 -3,150" fill="#20120e" opacity=".8"/>
<polygon points="8,60 18,55 14,85 6,95" fill="#0e0e10" opacity=".8"/>
<ellipse cx="23" cy="115" rx="5" ry="6" fill="#1a2a22"/>
<path d="M40,199 L55,165 L78,150 L95,137 L128,131 L146,145 L190,160 L206,110 L232,121 L278,125 L300,145 L325,165 L345,185 L358,197 L358,199Z" fill="url(#shirt)"/>
<path d="M232,121 L278,125 L300,145 L325,165 L340,199 L300,199 L270,160 L240,140Z" fill="#bcd8e0" opacity=".55"/>
<polygon points="150,128 192,112 206,100 208,150 190,162 160,158 146,145" fill="#6a5244"/><polygon points="191,114 206,100 208,150 197,158" fill="#3b3735"/><polygon points="158,143 188,148 196,158 172,158" fill="#3b3735"/>
<polygon points="203,103 232,121 217,152 205,138" fill="#b5d0da"/>
<polygon points="95,137 128,131 146,145 120,150" fill="#9ebfcb"/>
<path transform="translate(160,64) scale(1.06,1.04) translate(-160,-64)" d="M151,1 C135,1 122,14 119,33 C116,50 118,75 126,93 C132,108 140,120 152,128 C160,133 172,131 182,124 C194,115 201,102 203,85 C210,80 213,66 209,56 C207,50 204,50 203,52 C203,36 196,16 182,8 C172,2 160,0 151,1Z" fill="url(#face)"/>
</g>
<g filter="url(#b3)">
<path d="M162,2 C186,4 200,25 205,54 L197,56 C195,38 188,20 170,10Z" fill="#3e3026" opacity=".85"/>
<ellipse cx="150" cy="11" rx="15" ry="7" fill="#dcc7b0" opacity=".55"/>
<path d="M121,84 C127,110 144,128 160,131 C180,130 198,112 203,86 C192,104 172,113 152,111 C139,109 128,99 121,84Z" fill="#574134" opacity=".7"/>
<ellipse cx="147" cy="97" rx="12" ry="5" fill="#a8574b" opacity=".8"/>
<ellipse cx="127" cy="52" rx="9" ry="4.5" fill="#4e3b30" opacity=".75"/><ellipse cx="165" cy="47" rx="10" ry="4.5" fill="#4e3b30" opacity=".75"/>
<ellipse cx="127" cy="44" rx="10" ry="2.5" fill="#5c4638" opacity=".5"/><ellipse cx="166" cy="38" rx="12" ry="2.5" fill="#5c4638" opacity=".5"/>
<ellipse cx="140" cy="62" rx="5" ry="10" fill="#d3b59b" opacity=".7"/>
<ellipse cx="146" cy="79" rx="8" ry="4" fill="#7a5a48" opacity=".6"/>
<ellipse cx="190" cy="60" rx="9" ry="28" fill="#6b4f40" opacity=".45"/>
<ellipse cx="207" cy="66" rx="4" ry="10" fill="#9a725c" opacity=".8"/>
</g>
<rect x="0" y="148.5" width="207" height="50.5" fill="#1a1a1a" opacity="0.6"/>
</svg>
<div class="t" style="left:1611.0px;top:155.0px;font-size:24.5px;line-height:32px;color:#fff;font-weight:bold;letter-spacing:-0.34px;">Quentin Junge...</div>
<div class="abs" style="left:0;top:129px;width:174px;height:88px;background:#fff;border-radius:0 5px 5px 0"></div>
<svg class="abs" style="left:11px;top:146px" width="54" height="54" viewBox="-27 -27 54 54">
<circle r="25" fill="#1f6a45"/><circle r="22.3" fill="none" stroke="#cfe0d2" stroke-width="2.2" stroke-dasharray="1.5 1.3" opacity=".75"/><circle r="19.3" fill="#2b7a55"/><circle r="18" fill="#fcfcf8"/>
<circle r="18.6" fill="none" stroke="#e2b42c" stroke-width="1.6" stroke-dasharray="9 108" transform="rotate(205)"/>
<circle r="18.6" fill="none" stroke="#c54a34" stroke-width="1.6" stroke-dasharray="7 110" transform="rotate(5)"/>
<path d="M-1,-6 C1,-4 3,0 3,4 L-3,4 C-3,0 -2,-4 -1,-6Z" fill="#c98a3c"/>
<path d="M-10,-4h6M4,-2h7M-9,4h5M5,5h5" stroke="#ecd9bd" stroke-width=".9"/>
<path d="M-12,13 C-5,16 5,16 12,13" stroke="#8fa8c8" stroke-width="1.6" fill="none"/>
<path d="M-9,22.5 C-3,25 3,25 9,22.5" stroke="#0f4a2c" stroke-width="2.5" fill="none"/></svg>
<svg class="abs" style="left:75.4px;top:157.3px" width="32" height="32" viewBox="-16 -16 32 32">
<circle r="15.2" fill="#9c6631"/><path d="M-15,2 A15.2,15.2 0 0 0 3,14.9 C-2,10 -5,4 -8,1Z" fill="#80501f" opacity=".6"/>
<path d="M-8,-8 C-5,-11.5 2,-11.5 6,-9 C8,-6 11,-3 11,0 C9,1 8,3 7,5 C6,8 4,11 2,14 C0,14 -1,11 -1,8 C-2,5 -3,3 -4,1 C-7,1 -10,-1 -10,-4 C-10,-6 -9,-7 -8,-8Z" fill="#fbf4e6"/>
<path d="M-3,-3.5 C0,-4.5 2.5,-2 3,0 C2,2 0.5,3 -0.5,5 C-2,3 -4,1 -4,-1.5Z" fill="#a89a34"/></svg>
<div class="t" style="left:107.5px;top:147.5px;font-family:'Liberation Serif',serif;font-size:43px;line-height:52px;color:#927256;letter-spacing:-0.9px">fac</div>
<div class="abs" style="left:234px;top:142px;width:147px;height:64px;background:#f5f5f5"></div>
<div class="abs" style="left:381px;top:142px;width:147px;height:64px;background:#ffffff"></div>
<div class="abs" style="left:528px;top:142px;width:148px;height:64px;background:#f5f5f5"></div>
<div class="abs" style="left:676px;top:142px;width:148px;height:64px;background:#f5f5f5"></div>
<div class="abs" style="left:234px;top:202px;width:147px;height:4px;background:#11935a"></div>
<div class="abs" style="left:288.0px;top:118.0px;width:39.0px;height:39.0px;border-radius:50%;background:#fff;box-sizing:border-box;border:1.4px solid #3cb591;"></div>
<svg class="abs" style="left:295.5px;top:125.5px" width="24.0" height="24.0" viewBox="0 0 24 24" fill="none" stroke="#45b99a" stroke-width="1.25" stroke-linejoin="round" stroke-linecap="round"><circle cx="8.5" cy="8.5" r="4.6"/><circle cx="16.5" cy="7" r="3.2"/><circle cx="13.5" cy="15" r="3.6"/><path d="M8.5,13v4M16.5,10.2v2M13.5,18.6v3M6.5,8.5l2,2l2,-2M12,15l1.5,1.5l1.5,-1.5"/></svg>
<div class="abs" style="left:435.5px;top:118.0px;width:39.0px;height:39.0px;border-radius:50%;background:#f6f7f4;box-sizing:border-box;"></div>
<svg class="abs" style="left:443.6px;top:126.6px" width="22.799999999999997" height="22.799999999999997" viewBox="0 0 24 24" fill="none" stroke="#3a9d8c" stroke-width="1.32" stroke-linejoin="round" stroke-linecap="round"><circle cx="12" cy="13" r="6"/><circle cx="6.5" cy="7" r="2.2"/><circle cx="17.5" cy="7" r="2.2"/><ellipse cx="9.5" cy="12" rx="1.4" ry="2"/><ellipse cx="14.5" cy="12" rx="1.4" ry="2"/><path d="M10.5,16h3"/></svg>
<div class="abs" style="left:582.5px;top:118.0px;width:39.0px;height:39.0px;border-radius:50%;background:#f5f5f5;box-sizing:border-box;"></div>
<svg class="abs" style="left:591.2px;top:127.2px" width="21.6" height="21.6" viewBox="0 0 24 24" fill="none" stroke="#b9bcc0" stroke-width="1.39" stroke-linejoin="round" stroke-linecap="round"><path d="M6,3h10v15H6zM8,6h6M8,9h6"/><circle cx="15" cy="16" r="3"/><path d="M13.5,18.5v3l1.5,-1l1.5,1v-3"/></svg>
<div class="abs" style="left:730.5px;top:118.0px;width:39.0px;height:39.0px;border-radius:50%;background:#f5f5f5;box-sizing:border-box;"></div>
<svg class="abs" style="left:739.2px;top:127.2px" width="21.6" height="21.6" viewBox="0 0 24 24" fill="none" stroke="#b9bcc0" stroke-width="1.39" stroke-linejoin="round" stroke-linecap="round"><circle cx="11" cy="12" r="7"/><path d="M7,8c2,1 2,3 0,5M12,5c-1,3 2,4 1,7M18,6v5h-5M14,15h6v4h-6z"/></svg>
<div class="t" style="left:267.0px;top:161.6px;font-size:12.6px;line-height:16px;color:#777;font-weight:normal;letter-spacing:1.07px;">Gestion des</div>
<div class="t" style="left:287.0px;top:178.9px;font-size:12.6px;line-height:16px;color:#777;font-weight:normal;letter-spacing:1.41px;">forêts</div>
<div class="t" style="left:409.5px;top:161.6px;font-size:12.6px;line-height:16px;color:#777;font-weight:normal;letter-spacing:1.28px;">Biodiversité /</div>
<div class="t" style="left:410.5px;top:178.9px;font-size:12.6px;line-height:16px;color:#777;font-weight:normal;letter-spacing:1.15px;">Conservation</div>
<div class="t" style="left:555.0px;top:161.6px;font-size:12.6px;line-height:16px;color:#c2c4c8;font-weight:normal;letter-spacing:1.11px;">Cadre légal et</div>
<div class="t" style="left:572.5px;top:178.9px;font-size:12.6px;line-height:16px;color:#c2c4c8;font-weight:normal;letter-spacing:1.32px;">juridique</div>
<div class="t" style="left:707.0px;top:161.6px;font-size:12.6px;line-height:16px;color:#c2c4c8;font-weight:normal;letter-spacing:1.48px;">Changement</div>
<div class="t" style="left:714.0px;top:178.9px;font-size:12.6px;line-height:16px;color:#c2c4c8;font-weight:normal;letter-spacing:1.30px;">Climatique</div>
<div class="abs" style="left:838.5px;top:141.5px;width:64px;height:26px;background:#0f9a58;border-radius:3px 3px 0 0"></div>
<div class="t" style="left:849.0px;top:147.1px;font-size:10.8px;line-height:14px;color:#fff;font-weight:bold;letter-spacing:0.45px;">NIVEAU</div>
<div class="abs" style="left:838.5px;top:165.7px;width:304.5px;height:40px;background:#fff;border-radius:0 5px 5px 4px"></div>
<div class="abs" style="left:838.5px;top:165.7px;width:109px;height:40px;background:#023e16;border-radius:0 0 0 4px"></div>
<div class="abs" style="left:1055px;top:176px;width:1px;height:22px;background:#e4e4e4"></div>
<div class="abs" style="left:849.3px;top:171.8px;width:28px;height:28px;border-radius:50%;background:#e9f7f0;box-sizing:border-box;"></div>
<svg class="abs" style="left:850.6999999999999px;top:173.20000000000002px" width="25.200000000000003" height="25.200000000000003" viewBox="0 0 24 24" fill="none" stroke="#3cb591" stroke-width="1.19" stroke-linejoin="round" stroke-linecap="round"><circle cx="12" cy="12" r="8"/><path d="M6,8c3,0 4,2 3,4s1,4 3,6M13,4c0,3 3,3 4,5s-1,3 1,5M5,15c2,-1 3,1 4,3"/></svg>
<div class="t" style="left:883.5px;top:177.9px;font-size:12.6px;line-height:16px;color:#fff;font-weight:bold;letter-spacing:0.10px;">Régional</div>
<svg class="abs" style="left:963.4px;top:175.4px" width="19.200000000000003" height="19.200000000000003" viewBox="0 0 24 24" fill="none" stroke="#5cc3a6" stroke-width="1.56" stroke-linejoin="round" stroke-linecap="round"><path d="M4,12l2,-4l3,1l2,-3l4,1l2,2l3,0l0,4l-3,3l-4,-1l-3,2l-4,-1z"/></svg>
<div class="t" style="left:993.5px;top:177.6px;font-size:12.6px;line-height:16px;color:#6b6b6b;font-weight:normal;letter-spacing:0.66px;">National</div>
<svg class="abs" style="left:1069.8px;top:174.8px" width="20.4" height="20.4" viewBox="0 0 24 24" fill="none" stroke="#3fae93" stroke-width="1.47" stroke-linejoin="round" stroke-linecap="round"><path d="M5,20l2,-8h10l2,8zM8,12l4,-8l4,8M12,4v3M10,15l2,3l3,-5"/></svg>
<div class="t" style="left:1100.8px;top:177.6px;font-size:12.6px;line-height:16px;color:#6b6b6b;font-weight:normal;letter-spacing:0.22px;">Local</div>
<div class="abs" style="left:1843.5px;top:199px;width:28px;height:46px;background:#fff;border-radius:0 0 4px 4px"></div>
<div class="abs" style="left:1852px;top:203px;width:11px;height:2.2px;background:#333"></div><div class="abs" style="left:1856.4px;top:199px;width:2.2px;height:10px;background:#333"></div>
<div class="abs" style="left:1844px;top:216.5px;width:27px;height:1px;background:#e2e2e2"></div>
<div class="abs" style="left:1852px;top:229.8px;width:11px;height:2.4px;background:#333"></div>
<div class="abs" style="left:1783.5px;top:277px;width:98.5px;height:252px;background:#023e16;border-radius:3px 0 0 3px"></div>
<div class="abs" style="left:1783.5px;top:355px;width:98.5px;height:1.6px;background:#35b06f"></div>
<div class="abs" style="left:1783.5px;top:449.3px;width:98.5px;height:1.6px;background:#35b06f"></div>
<div class="abs" style="left:1811.7px;top:285.8px;width:40px;height:40px;border-radius:50%;background:#f0f7f0;box-sizing:border-box;"></div>
<svg class="abs" style="left:1816.1000000000001px;top:290.2px" width="31.200000000000003" height="31.200000000000003" viewBox="0 0 24 24" fill="none" stroke="#2f8f6a" stroke-width="0.96" stroke-linejoin="round" stroke-linecap="round"><path d="M12,4l9,4.5l-9,4.5l-9,-4.5zM3,12l9,4.5l9,-4.5M3,15.5l9,4.5l9,-4.5"/></svg>
<div class="abs" style="left:1811.7px;top:365.2px;width:40px;height:40px;border-radius:50%;background:#f0f7f0;box-sizing:border-box;"></div>
<svg class="abs" style="left:1817.3px;top:370.8px" width="28.799999999999997" height="28.799999999999997" viewBox="0 0 24 24" fill="none" stroke="#2f8f6a" stroke-width="1.04" stroke-linejoin="round" stroke-linecap="round"><path d="M5,3h13v16H5zM8,3v16M5,19v2h13"/><circle cx="13.5" cy="10" r="3.2"/><path d="M16,12.5l3,3"/></svg>
<div class="abs" style="left:1811.7px;top:460.3px;width:40px;height:40px;border-radius:50%;background:#f0f7f0;box-sizing:border-box;"></div>
<svg class="abs" style="left:1818.5px;top:467.1px" width="26.400000000000002" height="26.400000000000002" viewBox="0 0 24 24" fill="none" stroke="#2f8f6a" stroke-width="1.14" stroke-linejoin="round" stroke-linecap="round"><path d="M7,3h8l3,3v13H7zM9,7h5M9,10h6"/><circle cx="14" cy="15" r="2.6"/><path d="M12.7,17.2v4l1.3,-1l1.3,1v-4"/></svg>
<div class="t" style="left:1807.5px;top:331.3px;font-size:10.6px;line-height:14px;color:#fff;font-weight:bold;letter-spacing:0.53px;">Couches</div>
<div class="t" style="left:1798.5px;top:410.9px;font-size:10.6px;line-height:14px;color:#fff;font-weight:bold;letter-spacing:1.03px;">Documents</div>
<div class="t" style="left:1798.5px;top:425.5px;font-size:10.6px;line-height:14px;color:#fff;font-weight:bold;letter-spacing:0.69px;">disponibles</div>
<div class="t" style="left:1811.5px;top:505.8px;font-size:10.6px;line-height:14px;color:#fff;font-weight:bold;letter-spacing:0.65px;">Projets</div>
<div class="abs" style="left:1843px;top:367.5px;width:16px;height:10.5px;background:#e2544f;border-radius:2px"></div>
<div class="t" style="left:1845.0px;top:368.9px;font-size:7.2px;line-height:9px;color:#fff;font-weight:bold;letter-spacing:0.13px;">113</div>
<div class="abs" style="left:1843px;top:462px;width:16px;height:10.5px;background:#e2544f;border-radius:2px"></div>
<div class="t" style="left:1846.5px;top:463.4px;font-size:7.2px;line-height:9px;color:#fff;font-weight:bold;letter-spacing:0.50px;">29</div>
<svg class="abs" style="left:1637px;top:944px" width="104" height="98" viewBox="0 0 104 98">
<g fill="#67b84a">
<path d="M3,53.5 C15,50 33,44 52,35 C60,31 68,30 75,31 C85,33 95,41 99,49 L99,55 L3,56.5Z"/>
<path d="M4,41.5 C4.5,34 7,28 11,23 C12.5,29 9.5,36 4,41.5Z"/>
<path d="M11.5,41 C14,28 22,14 33,5 C34,17 26,32 11.5,41Z"/>
<path d="M28.5,35 C32,22 42,9 55.5,3 C55,14 45,28 28.5,35Z"/>
<path d="M51,24.5 C56,16 65,10 75.5,9.5 C72,17 62,23.5 51,24.5Z"/>
<path d="M72.5,22 C77,17.5 84,17 89,19 C85,23.5 78,24.5 72.5,22Z"/>
<path d="M88,24.5 C92,25.5 95,28 95.5,31.5 C92,30.5 89,28 88,24.5Z"/>
<path d="M6,63 C16,63.5 30,78 36,92 C26,90 9,78 6,63Z"/>
<path d="M24,63.5 C38,63.5 58,76 69,89 C62,96 50,97 43,93 C38,84 30,72 24,63.5Z"/>
<path d="M47,63 C62,62 80,68 88.5,77 C86,83 82,86 78,86.5 C70,78 58,68 47,63Z"/>
<path d="M83,63 L98,63 C97,67 95,70 93.5,71 C90,67 86,64 83,63Z"/>
</g></svg>
<div class="t" style="left:1760.5px;top:955.1px;font-size:22.7px;line-height:30px;color:#67b84a;font-weight:normal;letter-spacing:-0.19px;">Global</div>
<div class="t" style="left:1760.5px;top:977.3px;font-size:22.7px;line-height:30px;color:#67b84a;font-weight:normal;letter-spacing:-0.36px;">Landscapes</div>
<div class="t" style="left:1760.5px;top:999.7px;font-size:22.7px;line-height:30px;color:#67b84a;font-weight:normal;letter-spacing:-0.22px;">Forum</div>
<div class="t" style="left:1648.0px;top:1051.3px;font-size:22.8px;line-height:30px;color:#fff;font-weight:bold;letter-spacing:-0.09px;font-family:'DejaVu Sans',sans-serif;">Powered by Zoom</div>
<div class="abs" style="left:1611px;top:1131px;width:271px;height:3px;background:#b9d3de"></div>
<svg class="abs" style="left:1px;top:1122px" width="22" height="22" viewBox="0 0 22 22"><circle cx="10" cy="10.5" r="8.7" fill="#fff"/><circle cx="10" cy="10.5" r="6.3" fill="#3b4b5b"/><path d="M10,6.2l1.3,3l3,1.3l-3,1.3l-1.3,3l-1.3,-3l-3,-1.3l3,-1.3z" fill="#fff"/></svg>
<div class="t" style="left:24.5px;top:1121.9px;font-size:15.6px;line-height:20px;color:#3b4b5b;font-weight:bold;letter-spacing:-0.09px;text-shadow:0 0 1.5px #fff,0 0 1.5px #fff,0 0 2px #fff,0 0 2px #fff;">mapbox</div>
<div class="abs" style="left:22.5px;top:449.5px;width:352px;height:26px;background:#008f4e"></div>
<div class="t" style="left:33.5px;top:455.2px;font-size:10.4px;line-height:14px;color:#e8fff2;font-weight:normal;letter-spacing:0.88px;">Thématique:</div>
<div class="t" style="left:105.5px;top:455.2px;font-size:10.4px;line-height:14px;color:#fff;font-weight:bold;letter-spacing:0.69px;">GESTION DES FORÊTS</div>
<div class="t" style="left:245.0px;top:455.2px;font-size:10.4px;line-height:14px;color:#fff;font-weight:bold;letter-spacing:0.54px;">-</div>
<div class="t" style="left:258.5px;top:455.2px;font-size:10.4px;line-height:14px;color:#e8fff2;font-weight:bold;letter-spacing:0.56px;">Niveau:</div>
<div class="t" style="left:304.0px;top:455.2px;font-size:10.4px;line-height:14px;color:#fff;font-weight:bold;letter-spacing:0.64px;">RÉGIONAL</div>
<div class="abs" style="left:22.5px;top:474.8px;width:659.5px;height:562.7px;background:#fff;border-radius:3px 3px 0 0"></div>
<div class="abs" style="left:42.5px;top:489.5px;width:625px;height:38.5px;background:#f5f5f5;border-radius:3px"></div>
<svg class="abs" style="left:57.9px;top:499.4px" width="19.200000000000003" height="19.200000000000003" viewBox="0 0 24 24" fill="none" stroke="#2c9c80" stroke-width="1.56" stroke-linejoin="round" stroke-linecap="round"><path d="M3.5,17.5L7,9.2Q7.8,7.2 10,7.2H14.5Q16.6,7.2 17.4,9.2L21,17.5Q21,19.6 19,19.6H5.5Q3.5,19.6 3.5,17.5Z" fill="#2c9c80" stroke="#2c9c80"/><g fill="#e6f5ee" stroke="none"><circle cx="8" cy="16.3" r="1.5"/><circle cx="12.2" cy="16.3" r="1.5"/><circle cx="16.4" cy="16.3" r="1.5"/><circle cx="10.1" cy="12.4" r="1.4"/><circle cx="14.3" cy="12.4" r="1.4"/><circle cx="12.2" cy="9.2" r="1.1"/></g></svg>
<div class="t" style="left:98.0px;top:497.2px;font-size:18.2px;line-height:24px;color:#454545;font-weight:normal;letter-spacing:0.95px;">Production régionale de grumes</div>
<div class="abs" style="left:42.5px;top:537px;width:625px;height:38.5px;background:#f5f5f5;border-radius:3px"></div>
<svg class="abs" style="left:57.9px;top:546.9px" width="19.200000000000003" height="19.200000000000003" viewBox="0 0 24 24" fill="none" stroke="#2c9c80" stroke-width="1.56" stroke-linejoin="round" stroke-linecap="round"><circle cx="8.5" cy="8.5" r="4.6"/><circle cx="16.5" cy="7" r="3.2"/><circle cx="13.5" cy="15" r="3.6"/><path d="M8.5,13v4M16.5,10.2v2M13.5,18.6v3M6.5,8.5l2,2l2,-2M12,15l1.5,1.5l1.5,-1.5"/></svg>
<div class="t" style="left:98.0px;top:544.7px;font-size:18.2px;line-height:24px;color:#454545;font-weight:normal;letter-spacing:0.26px;">Essences</div>
<div class="abs" style="left:42.5px;top:881px;width:625px;height:38.5px;background:#f5f5f5;border-radius:3px"></div>
<svg class="abs" style="left:57.9px;top:890.9px" width="19.200000000000003" height="19.200000000000003" viewBox="0 0 24 24" fill="none" stroke="#2c9c80" stroke-width="1.56" stroke-linejoin="round" stroke-linecap="round"><path d="M6,3h12v18H6zM9,7h6M9,10h6"/><circle cx="12" cy="15" r="2.5"/></svg>
<div class="t" style="left:98.0px;top:888.7px;font-size:18.2px;line-height:24px;color:#454545;font-weight:normal;letter-spacing:0.56px;">Permis</div>
<div class="abs" style="left:42.5px;top:928.5px;width:625px;height:38.5px;background:#f5f5f5;border-radius:3px"></div>
<svg class="abs" style="left:57.9px;top:938.4px" width="19.200000000000003" height="19.200000000000003" viewBox="0 0 24 24" fill="none" stroke="#2c9c80" stroke-width="1.56" stroke-linejoin="round" stroke-linecap="round"><path d="M3,21h18M5,21v-6h3v6M10,21v-9h3v9M15,21v-12h3v12M4,11l5,-4l4,2l7,-6M17,3h3v3"/></svg>
<div class="t" style="left:97.5px;top:936.2px;font-size:18.2px;line-height:24px;color:#454545;font-weight:normal;letter-spacing:0.90px;">Commercialisation</div>
<div class="abs" style="left:42.5px;top:976px;width:625px;height:38.5px;background:#f5f5f5;border-radius:3px"></div>
<svg class="abs" style="left:57.9px;top:985.9px" width="19.200000000000003" height="19.200000000000003" viewBox="0 0 24 24" fill="none" stroke="#2c9c80" stroke-width="1.56" stroke-linejoin="round" stroke-linecap="round"><path d="M3,21h18M5,21v-9l5,-3v3l5,-3v12M15,21v-16h4v16M7,15h2M11,15h2M7,18h2M11,18h2M6,5c2,-2 5,-2 9,0"/></svg>
<div class="t" style="left:97.5px;top:983.7px;font-size:18.2px;line-height:24px;color:#454545;font-weight:normal;letter-spacing:0.93px;">Compagnies</div>
<div class="t" style="left:197.0px;top:587.2px;font-size:17.6px;line-height:23px;color:#2c2c2c;font-weight:bold;letter-spacing:0.90px;">Production régionale par essence</div>
<svg class="abs" style="left:631px;top:592px" width="17" height="18" viewBox="0 0 17 18" fill="none" stroke="#9a9a9a" stroke-width="1.2"><path d="M8.5,2v10M4.5,8.5l4,4l4,-4M2,12.5v3.5h13v-3.5"/></svg>
<svg class="abs" style="left:22px;top:575px" width="660" height="260" viewBox="22 575 660 260">
<path d="M352.6,659.3L352.60,629.30A30,30 0 0 1 381.36,650.78Z" fill="#3f8f5f"/>
<path d="M352.6,659.3L381.36,650.78A30,30 0 0 1 369.81,683.87Z" fill="#d3c637"/>
<path d="M352.6,659.3L369.81,683.87A30,30 0 0 1 347.39,688.84Z" fill="#2d4f93"/>
<path d="M352.6,659.3L347.39,688.84A30,30 0 0 1 338.52,685.79Z" fill="#7b6a24"/>
<path d="M352.6,659.3L338.52,685.79A30,30 0 0 1 352.60,629.30Z" fill="#2b60aa"/>
<g fill="none" stroke-width="1.2">
<polyline points="297,646 312,646 323,651" stroke="#5d6f8a"/>
<polyline points="315,703 330,703 342,686" stroke="#6b5c2a"/>
<polyline points="383,663 396,663 409,663" stroke="#5e8a80"/>
<polyline points="381,670 390,676 406,676" stroke="#d9cf55"/>
</g>
<text x="68.5" y="651.2" font-size="11.8" fill="#46689c" font-weight="normal" textLength="224.0" lengthAdjust="spacing" opacity="1">Autres: 934619.9099999999 (32.33%)</text>
<text x="146" y="651.2" font-size="11.8" fill="#6d8f86" font-weight="normal" textLength="146.0" lengthAdjust="spacing" opacity="0.75">Okoumé: 999999999 (14.13%)</text>
<text x="100" y="706.2" font-size="11.8" fill="#8a7a3c" font-weight="normal" textLength="209.0" lengthAdjust="spacing" opacity="1">Tali (Missanda): 183296.91 (6.33%)</text>
<text x="126" y="706.2" font-size="11.8" fill="#4a4a4a" font-weight="normal" textLength="183.0" lengthAdjust="spacing" opacity="0.8">Okoumé: 484296.91 (16.33%)</text>
<text x="413.5" y="666.3" font-size="11.8" fill="#5c8a80" font-weight="normal" textLength="165.5" lengthAdjust="spacing" opacity="1">Sapelli: 674694.49 (23.33%)</text>
<text x="412" y="678.8" font-size="11.8" fill="#d9cf5a" font-weight="bold" textLength="239.5" lengthAdjust="spacing" opacity="1">Obeché (Obachi/ Ayous/ Samba/ Wawa</text>
<g stroke="#e2e4ea" stroke-width="1">
<line x1="133.0" y1="793.2" x2="636" y2="793.2"/>
<line x1="133.0" y1="778.7" x2="636" y2="778.7"/>
<line x1="133.0" y1="764.3" x2="636" y2="764.3"/>
<line x1="133.0" y1="749.9" x2="636" y2="749.9"/>
<line x1="133.0" y1="735.4" x2="636" y2="735.4"/>
<line x1="133.0" y1="721.0" x2="636" y2="721.0"/>
</g>
<line x1="216.7" y1="721.0" x2="216.7" y2="807.6" stroke="#c9cbd2" stroke-width="1"/>
<g stroke="#4f5560" stroke-width="1.2"><line x1="133.0" y1="721.0" x2="133.0" y2="807.6"/><line x1="132.5" y1="807.6" x2="636" y2="807.6"/>
<line x1="128.0" y1="807.6" x2="133.0" y2="807.6"/>
<line x1="128.0" y1="793.2" x2="133.0" y2="793.2"/>
<line x1="128.0" y1="778.7" x2="133.0" y2="778.7"/>
<line x1="128.0" y1="764.3" x2="133.0" y2="764.3"/>
<line x1="128.0" y1="749.9" x2="133.0" y2="749.9"/>
<line x1="128.0" y1="735.4" x2="133.0" y2="735.4"/>
<line x1="128.0" y1="721.0" x2="133.0" y2="721.0"/>
<line x1="133.0" y1="807.6" x2="133.0" y2="812.6"/>
<line x1="200.0" y1="807.6" x2="200.0" y2="812.6"/>
<line x1="267.0" y1="807.6" x2="267.0" y2="812.6"/>
<line x1="334.0" y1="807.6" x2="334.0" y2="812.6"/>
<line x1="401.0" y1="807.6" x2="401.0" y2="812.6"/>
<line x1="468.0" y1="807.6" x2="468.0" y2="812.6"/>
<line x1="535.0" y1="807.6" x2="535.0" y2="812.6"/>
<line x1="602.0" y1="807.6" x2="602.0" y2="812.6"/>
</g>
<g font-size="11.8" fill="#6a6a6a" text-anchor="end">
<text x="124" y="811.8" textLength="7" lengthAdjust="spacing">0</text>
<text x="124" y="797.4" textLength="44" lengthAdjust="spacing">500,000</text>
<text x="124" y="782.9" textLength="57.5" lengthAdjust="spacing">1,000,000</text>
<text x="124" y="768.5" textLength="57.5" lengthAdjust="spacing">1,500,000</text>
<text x="124" y="754.1" textLength="57.5" lengthAdjust="spacing">2,000,000</text>
<text x="124" y="739.6" textLength="57.5" lengthAdjust="spacing">2,500,000</text>
<text x="124" y="725.2" textLength="57.5" lengthAdjust="spacing">3,000,000</text>
</g><g font-size="11.8" fill="#6a6a6a" text-anchor="middle">
<text x="149.8" y="824.2" textLength="29" lengthAdjust="spacing">2005</text>
<text x="216.8" y="824.2" textLength="29" lengthAdjust="spacing">2007</text>
<text x="283.8" y="824.2" textLength="29" lengthAdjust="spacing">2009</text>
<text x="350.8" y="824.2" textLength="29" lengthAdjust="spacing">2011</text>
<text x="417.8" y="824.2" textLength="29" lengthAdjust="spacing">2013</text>
<text x="484.8" y="824.2" textLength="29" lengthAdjust="spacing">2015</text>
<text x="551.8" y="824.2" textLength="29" lengthAdjust="spacing">2017</text>
<text x="618.8" y="824.2" textLength="29" lengthAdjust="spacing">2019</text>
</g>
<path d="M183.2,803.6C191.6,803.8 200.0,804.5 216.8,804.7C233.5,804.7 233.5,804.4 250.2,804.4C267.0,804.4 267.0,804.7 283.8,804.7C300.5,804.6 300.5,804.4 317.2,804.1C334.0,803.9 334.0,803.9 350.8,803.8C367.5,803.8 367.5,803.8 384.2,803.8C401.0,803.2 401.0,802.2 417.8,801.2C434.5,800.3 434.5,800.1 451.2,800.1C468.0,801.2 468.0,805.9 484.8,805.9C501.5,805.6 501.5,800.4 518.2,798.9C535.0,798.9 535.0,798.9 551.8,800.1C568.5,801.7 568.5,803.6 585.2,805.3C602.0,807.0 610.4,806.6 618.8,807.0" fill="none" stroke="#e3dc8e" stroke-width="1.7"/>
<circle cx="183.2" cy="803.6" r="1.9" fill="#fff" stroke="#e3dc8e" stroke-width="0.9"/>
<circle cx="216.8" cy="804.7" r="1.9" fill="#fff" stroke="#e3dc8e" stroke-width="0.9"/>
<circle cx="250.2" cy="804.4" r="1.9" fill="#fff" stroke="#e3dc8e" stroke-width="0.9"/>
<circle cx="283.8" cy="804.7" r="1.9" fill="#fff" stroke="#e3dc8e" stroke-width="0.9"/>
<circle cx="317.2" cy="804.1" r="1.9" fill="#fff" stroke="#e3dc8e" stroke-width="0.9"/>
<circle cx="350.8" cy="803.8" r="1.9" fill="#fff" stroke="#e3dc8e" stroke-width="0.9"/>
<circle cx="384.2" cy="803.8" r="1.9" fill="#fff" stroke="#e3dc8e" stroke-width="0.9"/>
<circle cx="417.8" cy="801.2" r="1.9" fill="#fff" stroke="#e3dc8e" stroke-width="0.9"/>
<circle cx="451.2" cy="800.1" r="1.9" fill="#fff" stroke="#e3dc8e" stroke-width="0.9"/>
<circle cx="484.8" cy="805.9" r="1.9" fill="#fff" stroke="#e3dc8e" stroke-width="0.9"/>
<circle cx="518.2" cy="798.9" r="1.9" fill="#fff" stroke="#e3dc8e" stroke-width="0.9"/>
<circle cx="551.8" cy="800.1" r="1.9" fill="#fff" stroke="#e3dc8e" stroke-width="0.9"/>
<circle cx="585.2" cy="805.3" r="1.9" fill="#fff" stroke="#e3dc8e" stroke-width="0.9"/>
<circle cx="618.8" cy="807.0" r="1.9" fill="#fff" stroke="#e3dc8e" stroke-width="0.9"/>
<path d="M183.2,799.2C191.6,800.0 200.0,801.5 216.8,802.1C233.5,802.1 233.5,801.5 250.2,801.5C267.0,801.5 267.0,802.1 283.8,802.1C300.5,802.0 300.5,801.5 317.2,801.0C334.0,800.5 334.0,800.5 350.8,800.1C367.5,799.7 367.5,799.9 384.2,799.2C401.0,798.6 401.0,798.2 417.8,797.5C434.5,796.8 434.5,796.3 451.2,796.3C468.0,798.1 468.0,804.7 484.8,804.7C501.5,804.3 501.5,796.4 518.2,794.6C535.0,794.6 535.0,795.0 551.8,797.5C568.5,800.0 568.5,802.4 585.2,804.7C602.0,806.7 610.4,806.2 618.8,806.7" fill="none" stroke="#6f5f22" stroke-width="1.7"/>
<circle cx="183.2" cy="799.2" r="1.9" fill="#fff" stroke="#6f5f22" stroke-width="0.9"/>
<circle cx="216.8" cy="802.1" r="1.9" fill="#fff" stroke="#6f5f22" stroke-width="0.9"/>
<circle cx="250.2" cy="801.5" r="1.9" fill="#fff" stroke="#6f5f22" stroke-width="0.9"/>
<circle cx="283.8" cy="802.1" r="1.9" fill="#fff" stroke="#6f5f22" stroke-width="0.9"/>
<circle cx="317.2" cy="801.0" r="1.9" fill="#fff" stroke="#6f5f22" stroke-width="0.9"/>
<circle cx="350.8" cy="800.1" r="1.9" fill="#fff" stroke="#6f5f22" stroke-width="0.9"/>
<circle cx="384.2" cy="799.2" r="1.9" fill="#fff" stroke="#6f5f22" stroke-width="0.9"/>
<circle cx="417.8" cy="797.5" r="1.9" fill="#fff" stroke="#6f5f22" stroke-width="0.9"/>
<circle cx="451.2" cy="796.3" r="1.9" fill="#fff" stroke="#6f5f22" stroke-width="0.9"/>
<circle cx="484.8" cy="804.7" r="1.9" fill="#fff" stroke="#6f5f22" stroke-width="0.9"/>
<circle cx="518.2" cy="794.6" r="1.9" fill="#fff" stroke="#6f5f22" stroke-width="0.9"/>
<circle cx="551.8" cy="797.5" r="1.9" fill="#fff" stroke="#6f5f22" stroke-width="0.9"/>
<circle cx="585.2" cy="804.7" r="1.9" fill="#fff" stroke="#6f5f22" stroke-width="0.9"/>
<circle cx="618.8" cy="806.7" r="1.9" fill="#fff" stroke="#6f5f22" stroke-width="0.9"/>
<path d="M183.2,782.8C191.6,783.9 200.0,787.4 216.8,787.4C233.5,786.9 233.5,780.8 250.2,780.8C267.0,781.3 267.0,788.0 283.8,789.4C300.5,789.4 300.5,787.0 317.2,786.2C334.0,786.2 334.0,786.2 350.8,786.2C367.5,786.2 367.5,786.2 384.2,786.2C401.0,785.7 401.0,784.8 417.8,783.9C434.5,783.1 434.5,782.8 451.2,782.8C468.0,787.5 468.0,800.2 484.8,803.0C501.5,803.0 501.5,795.6 518.2,793.7C535.0,793.7 535.0,793.7 551.8,795.5C568.5,798.2 568.5,801.9 585.2,804.7C602.0,806.7 610.4,806.2 618.8,806.7" fill="none" stroke="#d9cd52" stroke-width="1.7"/>
<circle cx="183.2" cy="782.8" r="1.9" fill="#fff" stroke="#d9cd52" stroke-width="0.9"/>
<circle cx="216.8" cy="787.4" r="1.9" fill="#fff" stroke="#d9cd52" stroke-width="0.9"/>
<circle cx="250.2" cy="780.8" r="1.9" fill="#fff" stroke="#d9cd52" stroke-width="0.9"/>
<circle cx="283.8" cy="789.4" r="1.9" fill="#fff" stroke="#d9cd52" stroke-width="0.9"/>
<circle cx="317.2" cy="786.2" r="1.9" fill="#fff" stroke="#d9cd52" stroke-width="0.9"/>
<circle cx="350.8" cy="786.2" r="1.9" fill="#fff" stroke="#d9cd52" stroke-width="0.9"/>
<circle cx="384.2" cy="786.2" r="1.9" fill="#fff" stroke="#d9cd52" stroke-width="0.9"/>
<circle cx="417.8" cy="783.9" r="1.9" fill="#fff" stroke="#d9cd52" stroke-width="0.9"/>
<circle cx="451.2" cy="782.8" r="1.9" fill="#fff" stroke="#d9cd52" stroke-width="0.9"/>
<circle cx="484.8" cy="803.0" r="1.9" fill="#fff" stroke="#d9cd52" stroke-width="0.9"/>
<circle cx="518.2" cy="793.7" r="1.9" fill="#fff" stroke="#d9cd52" stroke-width="0.9"/>
<circle cx="551.8" cy="795.5" r="1.9" fill="#fff" stroke="#d9cd52" stroke-width="0.9"/>
<circle cx="585.2" cy="804.7" r="1.9" fill="#fff" stroke="#d9cd52" stroke-width="0.9"/>
<circle cx="618.8" cy="806.7" r="1.9" fill="#fff" stroke="#d9cd52" stroke-width="0.9"/>
<path d="M183.2,769.2C191.6,771.2 200.0,774.5 216.8,777.3C233.5,780.0 233.5,777.4 250.2,780.2C267.0,782.9 267.0,788.3 283.8,788.3C300.5,787.7 300.5,781.1 317.2,777.9C334.0,775.3 334.0,775.3 350.8,775.3C367.5,775.5 367.5,778.2 384.2,778.7C401.0,778.7 401.0,777.3 417.8,777.3C434.5,777.3 434.5,777.3 451.2,778.7C468.0,781.8 468.0,789.4 484.8,789.4C501.5,785.8 501.5,764.3 518.2,764.3C535.0,766.3 535.0,792.4 551.8,797.5C568.5,797.5 568.5,784.5 585.2,784.5C602.0,785.1 610.4,796.0 618.8,799.8" fill="none" stroke="#4c8c80" stroke-width="1.7"/>
<circle cx="183.2" cy="769.2" r="1.9" fill="#fff" stroke="#4c8c80" stroke-width="0.9"/>
<circle cx="216.8" cy="777.3" r="1.9" fill="#fff" stroke="#4c8c80" stroke-width="0.9"/>
<circle cx="250.2" cy="780.2" r="1.9" fill="#fff" stroke="#4c8c80" stroke-width="0.9"/>
<circle cx="283.8" cy="788.3" r="1.9" fill="#fff" stroke="#4c8c80" stroke-width="0.9"/>
<circle cx="317.2" cy="777.9" r="1.9" fill="#fff" stroke="#4c8c80" stroke-width="0.9"/>
<circle cx="350.8" cy="775.3" r="1.9" fill="#fff" stroke="#4c8c80" stroke-width="0.9"/>
<circle cx="384.2" cy="778.7" r="1.9" fill="#fff" stroke="#4c8c80" stroke-width="0.9"/>
<circle cx="417.8" cy="777.3" r="1.9" fill="#fff" stroke="#4c8c80" stroke-width="0.9"/>
<circle cx="451.2" cy="778.7" r="1.9" fill="#fff" stroke="#4c8c80" stroke-width="0.9"/>
<circle cx="484.8" cy="789.4" r="1.9" fill="#fff" stroke="#4c8c80" stroke-width="0.9"/>
<circle cx="518.2" cy="764.3" r="1.9" fill="#fff" stroke="#4c8c80" stroke-width="0.9"/>
<circle cx="551.8" cy="797.5" r="1.9" fill="#fff" stroke="#4c8c80" stroke-width="0.9"/>
<circle cx="585.2" cy="784.5" r="1.9" fill="#fff" stroke="#4c8c80" stroke-width="0.9"/>
<circle cx="618.8" cy="799.8" r="1.9" fill="#fff" stroke="#4c8c80" stroke-width="0.9"/>
<path d="M183.2,780.8C191.6,780.2 200.0,778.9 216.8,778.7C233.5,778.7 233.5,779.8 250.2,780.2C267.0,780.2 267.0,780.2 283.8,780.2C300.5,779.6 300.5,779.5 317.2,777.9C334.0,776.2 334.0,773.5 350.8,773.5C367.5,773.8 367.5,778.2 384.2,778.7C401.0,778.7 401.0,778.7 417.8,775.8C434.5,771.7 434.5,762.0 451.2,762.0C468.0,766.7 468.0,792.6 484.8,794.6C501.5,794.6 501.5,774.3 518.2,770.1C535.0,770.1 535.0,772.6 551.8,777.9C568.5,783.1 568.5,785.7 585.2,791.1C602.0,796.6 610.4,797.6 618.8,799.8" fill="none" stroke="#3b62a3" stroke-width="1.7"/>
<circle cx="183.2" cy="780.8" r="1.9" fill="#fff" stroke="#3b62a3" stroke-width="0.9"/>
<circle cx="216.8" cy="778.7" r="1.9" fill="#fff" stroke="#3b62a3" stroke-width="0.9"/>
<circle cx="250.2" cy="780.2" r="1.9" fill="#fff" stroke="#3b62a3" stroke-width="0.9"/>
<circle cx="283.8" cy="780.2" r="1.9" fill="#fff" stroke="#3b62a3" stroke-width="0.9"/>
<circle cx="317.2" cy="777.9" r="1.9" fill="#fff" stroke="#3b62a3" stroke-width="0.9"/>
<circle cx="350.8" cy="773.5" r="1.9" fill="#fff" stroke="#3b62a3" stroke-width="0.9"/>
<circle cx="384.2" cy="778.7" r="1.9" fill="#fff" stroke="#3b62a3" stroke-width="0.9"/>
<circle cx="417.8" cy="775.8" r="1.9" fill="#fff" stroke="#3b62a3" stroke-width="0.9"/>
<circle cx="451.2" cy="762.0" r="1.9" fill="#fff" stroke="#3b62a3" stroke-width="0.9"/>
<circle cx="484.8" cy="794.6" r="1.9" fill="#fff" stroke="#3b62a3" stroke-width="0.9"/>
<circle cx="518.2" cy="770.1" r="1.9" fill="#fff" stroke="#3b62a3" stroke-width="0.9"/>
<circle cx="551.8" cy="777.9" r="1.9" fill="#fff" stroke="#3b62a3" stroke-width="0.9"/>
<circle cx="585.2" cy="791.1" r="1.9" fill="#fff" stroke="#3b62a3" stroke-width="0.9"/>
<circle cx="618.8" cy="799.8" r="1.9" fill="#fff" stroke="#3b62a3" stroke-width="0.9"/>
<path d="M183.2,732.5C191.6,731.8 200.0,729.7 216.8,729.7C233.5,737.9 233.5,749.0 250.2,765.5C267.0,781.9 267.0,795.5 283.8,795.5C300.5,794.4 300.5,768.6 317.2,761.1C334.0,761.1 334.0,764.2 350.8,765.5C367.5,766.3 367.5,766.3 384.2,766.3C401.0,764.4 401.0,758.9 417.8,757.7C434.5,757.7 434.5,757.7 451.2,761.4C468.0,770.7 468.0,789.6 484.8,794.9C501.5,794.9 501.5,790.2 518.2,782.8C535.0,775.3 535.0,770.6 551.8,765.2C568.5,761.1 576.9,762.1 585.2,761.1" fill="none" stroke="#414b6e" stroke-width="1.7"/>
<circle cx="183.2" cy="732.5" r="1.9" fill="#fff" stroke="#414b6e" stroke-width="0.9"/>
<circle cx="216.8" cy="729.7" r="1.9" fill="#fff" stroke="#414b6e" stroke-width="0.9"/>
<circle cx="250.2" cy="765.5" r="1.9" fill="#fff" stroke="#414b6e" stroke-width="0.9"/>
<circle cx="283.8" cy="795.5" r="1.9" fill="#fff" stroke="#414b6e" stroke-width="0.9"/>
<circle cx="317.2" cy="761.1" r="1.9" fill="#fff" stroke="#414b6e" stroke-width="0.9"/>
<circle cx="350.8" cy="765.5" r="1.9" fill="#fff" stroke="#414b6e" stroke-width="0.9"/>
<circle cx="384.2" cy="766.3" r="1.9" fill="#fff" stroke="#414b6e" stroke-width="0.9"/>
<circle cx="417.8" cy="757.7" r="1.9" fill="#fff" stroke="#414b6e" stroke-width="0.9"/>
<circle cx="451.2" cy="761.4" r="1.9" fill="#fff" stroke="#414b6e" stroke-width="0.9"/>
<circle cx="484.8" cy="794.9" r="1.9" fill="#fff" stroke="#414b6e" stroke-width="0.9"/>
<circle cx="518.2" cy="782.8" r="1.9" fill="#fff" stroke="#414b6e" stroke-width="0.9"/>
<circle cx="551.8" cy="765.2" r="1.9" fill="#fff" stroke="#414b6e" stroke-width="0.9"/>
<circle cx="585.2" cy="761.1" r="1.9" fill="#fff" stroke="#414b6e" stroke-width="0.9"/>
</svg>
<div class="abs" style="left:53.5px;top:831.5px;width:271px;height:27.5px;background:#0d9a5a;border-radius:14px"></div>
<div class="t" style="left:64.0px;top:838.0px;font-size:11.6px;line-height:15px;color:#fff;font-weight:bold;letter-spacing:0.47px;">Nombre de pays ayant encodés par année</div>
<div class="abs" style="left:22.5px;top:1037.3px;width:659.5px;height:77.4px;background:#023e16;border-radius:0 0 3px 3px"></div>
<div class="abs" style="left:162.3px;top:1037.3px;width:77.79999999999998px;height:77.4px;background:#fff;box-sizing:border-box;border-bottom:4px solid #1aa865"></div>
<div class="abs" style="left:91.7px;top:1037.3px;width:1.4px;height:77.4px;background:#2f9e63"></div>
<div class="abs" style="left:337.5px;top:1037.3px;width:1.4px;height:77.4px;background:#2f9e63"></div>
<div class="abs" style="left:417.8px;top:1037.3px;width:1.4px;height:77.4px;background:#2f9e63"></div>
<div class="abs" style="left:517.3px;top:1037.3px;width:1.4px;height:77.4px;background:#2f9e63"></div>
<div class="abs" style="left:603.3px;top:1037.3px;width:1.4px;height:77.4px;background:#2f9e63"></div>
<div class="abs" style="left:37.8px;top:1045.5px;width:40px;height:40px;border-radius:50%;background:#f2f7f1;box-sizing:border-box;"></div>
<svg class="abs" style="left:43.4px;top:1051.1px" width="28.799999999999997" height="28.799999999999997" viewBox="0 0 24 24" fill="none" stroke="#2f9474" stroke-width="1.04" stroke-linejoin="round" stroke-linecap="round"><circle cx="8.5" cy="8.5" r="4.6"/><circle cx="16.5" cy="7" r="3.2"/><circle cx="13.5" cy="15" r="3.6"/><path d="M8.5,13v4M16.5,10.2v2M13.5,18.6v3M6.5,8.5l2,2l2,-2M12,15l1.5,1.5l1.5,-1.5"/></svg>
<div class="t" style="left:28.5px;top:1090.0px;font-size:10.4px;line-height:14px;color:#fff;font-weight:bold;letter-spacing:0.82px;">Superficie</div>
<div class="abs" style="left:107.4px;top:1045.5px;width:40px;height:40px;border-radius:50%;background:#f2f7f1;box-sizing:border-box;"></div>
<svg class="abs" style="left:113.0px;top:1051.1px" width="28.799999999999997" height="28.799999999999997" viewBox="0 0 24 24" fill="none" stroke="#2f9474" stroke-width="1.04" stroke-linejoin="round" stroke-linecap="round"><circle cx="6.5" cy="6" r="2.6"/><path d="M4,13l5,-4.5l3.5,2.5l7,-6.5M15.5,4h4.2v4.2"/><path d="M3.5,21v-3.2h5.2v-2.6h5.3v-2.7h6v8.5z" fill="#2f9474"/></svg>
<div class="t" style="left:98.5px;top:1090.0px;font-size:10.4px;line-height:14px;color:#fff;font-weight:bold;letter-spacing:1.10px;">Economie</div>
<div class="abs" style="left:180.9px;top:1045.5px;width:40px;height:40px;border-radius:50%;background:#f3f8f5;box-sizing:border-box;border:1.3px solid #3cb591;"></div>
<svg class="abs" style="left:186.5px;top:1051.1px" width="28.799999999999997" height="28.799999999999997" viewBox="0 0 24 24" fill="none" stroke="#2f9474" stroke-width="1.04" stroke-linejoin="round" stroke-linecap="round"><path d="M3.5,17.5L7,9.2Q7.8,7.2 10,7.2H14.5Q16.6,7.2 17.4,9.2L21,17.5Q21,19.6 19,19.6H5.5Q3.5,19.6 3.5,17.5Z" fill="#2f9474" stroke="#2f9474"/><g fill="#e6f5ee" stroke="none"><circle cx="8" cy="16.3" r="1.5"/><circle cx="12.2" cy="16.3" r="1.5"/><circle cx="16.4" cy="16.3" r="1.5"/><circle cx="10.1" cy="12.4" r="1.4"/><circle cx="14.3" cy="12.4" r="1.4"/><circle cx="12.2" cy="9.2" r="1.1"/></g></svg>
<div class="t" style="left:169.0px;top:1090.0px;font-size:10.4px;line-height:14px;color:#8a8a8a;font-weight:normal;letter-spacing:1.43px;">Production</div>
<div class="abs" style="left:269px;top:1045.5px;width:40px;height:40px;border-radius:50%;background:#f2f7f1;box-sizing:border-box;"></div>
<svg class="abs" style="left:274.6px;top:1051.1px" width="28.799999999999997" height="28.799999999999997" viewBox="0 0 24 24" fill="none" stroke="#2f9474" stroke-width="1.04" stroke-linejoin="round" stroke-linecap="round"><path d="M3,21h18M5,21v-9l5,-3v3l5,-3v12M15,21v-16h4v16M7,15h2M11,15h2M7,18h2M11,18h2M6,5c2,-2 5,-2 9,0"/></svg>
<div class="t" style="left:245.0px;top:1090.0px;font-size:10.4px;line-height:14px;color:#fff;font-weight:bold;letter-spacing:0.84px;">Transformation</div>
<div class="abs" style="left:358.2px;top:1045.5px;width:40px;height:40px;border-radius:50%;background:#f2f7f1;box-sizing:border-box;"></div>
<svg class="abs" style="left:363.8px;top:1051.1px" width="28.799999999999997" height="28.799999999999997" viewBox="0 0 24 24" fill="none" stroke="#2f9474" stroke-width="1.04" stroke-linejoin="round" stroke-linecap="round"><path d="M12,3v8M8,11h8l2,6H6zM4,19c2,2 4,0 5,0s3,2 5,0s3,0 5,0M9,7h6"/></svg>
<div class="t" style="left:344.5px;top:1090.0px;font-size:10.4px;line-height:14px;color:#fff;font-weight:bold;letter-spacing:0.93px;">Exportation</div>
<div class="abs" style="left:448px;top:1045.5px;width:40px;height:40px;border-radius:50%;background:#f2f7f1;box-sizing:border-box;"></div>
<svg class="abs" style="left:453.6px;top:1051.1px" width="28.799999999999997" height="28.799999999999997" viewBox="0 0 24 24" fill="none" stroke="#2f9474" stroke-width="1.04" stroke-linejoin="round" stroke-linecap="round"><path d="M4,5h16v15H4zM4,9h16M8,3v4M16,3v4M8,12h2M12,12h2M16,12h1M8,15h2M12,15h2M8,18h2"/><circle cx="18" cy="18" r="2.5"/></svg>
<div class="t" style="left:424.5px;top:1090.0px;font-size:10.4px;line-height:14px;color:#fff;font-weight:bold;letter-spacing:1.35px;">Aménagement</div>
<div class="abs" style="left:540.8px;top:1045.5px;width:40px;height:40px;border-radius:50%;background:#f2f7f1;box-sizing:border-box;"></div>
<svg class="abs" style="left:546.4px;top:1051.1px" width="28.799999999999997" height="28.799999999999997" viewBox="0 0 24 24" fill="none" stroke="#2f9474" stroke-width="1.04" stroke-linejoin="round" stroke-linecap="round"><path d="M3,9l9,-5l9,5zM5,9v9M9,9v9M15,9v9M19,9v9M3,18h18M2,21h20"/></svg>
<div class="t" style="left:523.0px;top:1090.0px;font-size:10.4px;line-height:14px;color:#fff;font-weight:bold;letter-spacing:0.87px;">Gouvernance</div>
<div class="abs" style="left:624px;top:1045.5px;width:40px;height:40px;border-radius:50%;background:#f2f7f1;box-sizing:border-box;"></div>
<svg class="abs" style="left:629.6px;top:1051.1px" width="28.799999999999997" height="28.799999999999997" viewBox="0 0 24 24" fill="none" stroke="#2f9474" stroke-width="1.04" stroke-linejoin="round" stroke-linecap="round"><circle cx="8.5" cy="8.5" r="4.6"/><circle cx="16.5" cy="7" r="3.2"/><circle cx="13.5" cy="15" r="3.6"/><path d="M8.5,13v4M16.5,10.2v2M13.5,18.6v3M6.5,8.5l2,2l2,-2M12,15l1.5,1.5l1.5,-1.5"/></svg>
<div class="t" style="left:611.0px;top:1090.0px;font-size:10.4px;line-height:14px;color:#fff;font-weight:bold;letter-spacing:0.86px;">Plantations</div>
<svg class="abs" style="left:347px;top:776px" width="24" height="36" viewBox="0 0 24 36"><path d="M2,2V27L8,21.5L12.5,32L17,30L12.5,20H20.5Z" fill="#fff" stroke="#111" stroke-width="1.6" stroke-linejoin="round"/></svg>
</body></html>
